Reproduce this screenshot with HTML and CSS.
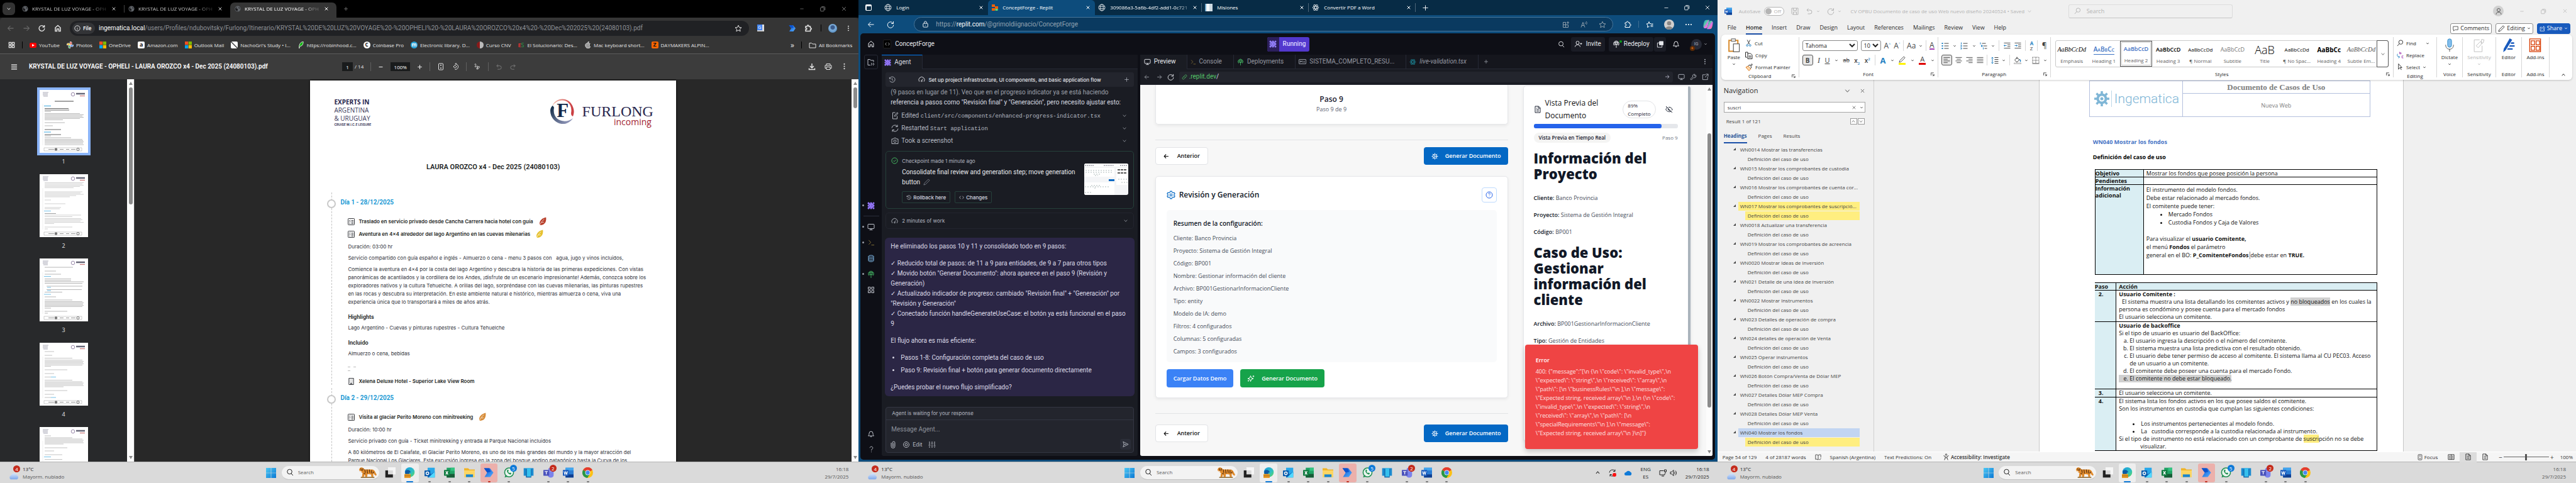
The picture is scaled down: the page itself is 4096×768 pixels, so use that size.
FILE: index.html
```html
<!DOCTYPE html>
<html lang="es">
<head>
<meta charset="utf-8">
<title>Escritorio</title>
<link rel="stylesheet" href="styles.css">
</head>
<body>
<svg class="defs" aria-hidden="true">
<defs>
<linearGradient id="g-win" x1="0" y1="0" x2="1" y2="1"><stop offset="0" stop-color="#4cc8f4"/><stop offset="1" stop-color="#0a78d4"/></linearGradient>
<linearGradient id="g-edge" x1="0" y1="0" x2="1" y2="1"><stop offset="0" stop-color="#1a9be0"/><stop offset=".6" stop-color="#30c1c0"/><stop offset="1" stop-color="#63d84f"/></linearGradient>
<linearGradient id="g-pa" x1="0" y1="0" x2="1" y2="1"><stop offset="0" stop-color="#0b53ce"/><stop offset="1" stop-color="#56b0ff"/></linearGradient>
<linearGradient id="g-cop" x1="0" y1="0" x2="1" y2="1"><stop offset="0" stop-color="#2a7de1"/><stop offset=".35" stop-color="#4fd0a0"/><stop offset=".6" stop-color="#e66cf0"/><stop offset="1" stop-color="#ff8a3c"/></linearGradient>
<linearGradient id="g-ring" x1="0" y1="0" x2="1" y2="0"><stop offset="0" stop-color="#f4c0b0"/><stop offset="1" stop-color="#c8363b"/></linearGradient>
<linearGradient id="g-ring2" x1="0" y1="0" x2="1" y2="1"><stop offset="0" stop-color="#0a2540"/><stop offset="1" stop-color="#a5a8cc"/></linearGradient>
<linearGradient id="g-cloud" x1="0" y1="0" x2="0" y2="1"><stop offset="0" stop-color="#d5e4fb"/><stop offset="1" stop-color="#7ea8ea"/></linearGradient>
</defs>
<symbol id="globe" viewBox="0 0 24 24"><circle cx="12" cy="12" r="10"/><ellipse cx="12" cy="12" rx="4.5" ry="10"/><path d="M3 8.5h18M3 15.5h18"/></symbol>
<symbol id="earth" viewBox="0 0 24 24"><circle cx="12" cy="12" r="11" fill="#5f6368" stroke="none"/><path d="M11 4c-5 2-6 6-3 7s5 2 4 5-1 4 0 5c-6 0-10-5-9-10 1-4 4-7 8-7zM15 6c3 0 5 2 5 5l-4-1z" fill="#1c1c1e" stroke="none"/></symbol>
<symbol id="x" viewBox="0 0 24 24"><path d="M5 5l14 14M19 5L5 19"/></symbol>
<symbol id="plus" viewBox="0 0 24 24"><path d="M12 3v18M3 12h18"/></symbol>
<symbol id="minus" viewBox="0 0 24 24"><path d="M4 12h16"/></symbol>
<symbol id="restore" viewBox="0 0 24 24"><rect x="4" y="7" width="13" height="14" rx="2"/><path d="M8 4h10a3 3 0 0 1 3 3v10"/></symbol>
<symbol id="down" viewBox="0 0 24 24"><path d="M5 8l7 8 7-8"/></symbol>
<symbol id="up" viewBox="0 0 24 24"><path d="M5 16l7-8 7 8"/></symbol>
<symbol id="left" viewBox="0 0 24 24"><path d="M21 12H4M11 4l-8 8 8 8"/></symbol>
<symbol id="right" viewBox="0 0 24 24"><path d="M3 12h17M13 4l8 8-8 8"/></symbol>
<symbol id="reload" viewBox="0 0 24 24"><path d="M20 8a9.5 9.5 0 1 0 1.500 5M21 2v7h-7"/></symbol>
<symbol id="home" viewBox="0 0 24 24"><path d="M4 10l8-7 8 7v11h-5v-7H9v7H4z"/></symbol>
<symbol id="info" viewBox="0 0 24 24"><circle cx="12" cy="12" r="10"/><path d="M12 11v6M12 7v1"/></symbol>
<symbol id="star" viewBox="0 0 24 24"><path d="M12 2.500l3 6.500 7 .8-5.200 4.700 1.500 7-6.300-3.600-6.300 3.600 1.500-7L2 9.800 9 9z"/></symbol>
<symbol id="puzzle" viewBox="0 0 24 24"><path d="M4 6h5V4.500a2.500 2.500 0 0 1 5 0V6h5v5h1a2.500 2.500 0 0 1 0 5h-1v5H4v-5h1.500a2.500 2.500 0 0 0 0-5H4z"/></symbol>
<symbol id="dots" viewBox="0 0 24 24"><g fill="currentColor" stroke="none"><circle cx="12" cy="4" r="2.300"/><circle cx="12" cy="12" r="2.300"/><circle cx="12" cy="20" r="2.300"/></g></symbol>
<symbol id="hdots" viewBox="0 0 24 24"><g fill="currentColor" stroke="none"><circle cx="4" cy="12" r="2.200"/><circle cx="12" cy="12" r="2.200"/><circle cx="20" cy="12" r="2.200"/></g></symbol>
<symbol id="grid" viewBox="0 0 24 24"><path d="M3 3h7v7H3zM14 3h7v7h-7zM3 14h7v7H3zM14 14h7v7h-7z"/></symbol>
<symbol id="menu" viewBox="0 0 24 24"><path d="M2 5h20M2 12h20M2 19h20"/></symbol>
<symbol id="folder" viewBox="0 0 24 24"><path d="M2 5h7l3 3h10v12H2z"/></symbol>
<symbol id="fit" viewBox="0 0 24 24"><rect x="5" y="2" width="14" height="20" rx="2"/><path d="M12 6v4M10 8l2-2 2 2M12 18v-4M10 16l2 2 2-2"/></symbol>
<symbol id="rotate" viewBox="0 0 24 24"><path d="M11 7l5 5-5 5-5-5zM13 3a9 9 0 1 1-2 18M15 0l-3 3 3 3"/></symbol>
<symbol id="draw" viewBox="0 0 24 24"><path d="M3 5c4-4 6 0 3 4s-1 5 3 2 5 0 2 4-1 6 3 4 6-8 3-8-6 6-3 9"/></symbol>
<symbol id="undo" viewBox="0 0 24 24"><path d="M9 3L4 8l5 5M4 8h10a6 6 0 0 1 0 12H7"/></symbol>
<symbol id="redo" viewBox="0 0 24 24"><path d="M15 3l5 5-5 5M20 8H10a6 6 0 0 0 0 12h7"/></symbol>
<symbol id="download" viewBox="0 0 24 24"><path d="M12 2v13M6 10l6 6 6-6M3 17v4h18v-4"/></symbol>
<symbol id="print" viewBox="0 0 24 24"><path d="M6 8V3h12v5M6 17H2V8h20v9h-4M6 13h12v8H6z"/></symbol>
<symbol id="search" viewBox="0 0 24 24"><circle cx="11" cy="10" r="7.500"/><path d="M16 16l6 6"/></symbol>
<symbol id="searchl" viewBox="0 0 24 24"><circle cx="14" cy="9" r="7"/><path d="M9 14l-7 8"/></symbol>
<symbol id="lock" viewBox="0 0 24 24"><rect x="4" y="9" width="16" height="13" rx="2"/><path d="M8 9V6a4 4 0 0 1 8 0v3M12 14.500v2"/></symbol>
<symbol id="checklist" viewBox="0 0 24 24"><rect x="1" y="1" width="22" height="22" rx="2"/><path d="M5 7l1.500 1.500L9 6M12 8h8M5 12l1.500 1.500L9 11M12 13h8M5 18h3M12 18h8"/></symbol>
<symbol id="building" viewBox="0 0 24 24"><path d="M4 1h16v22H4zM8 5v1M12 5v1M16 5v1M8 9v1M12 9v1M16 9v1M8 13v1M12 13v1M16 13v1M10 23v-5h4v5"/></symbol>
<symbol id="leaf" viewBox="0 0 24 24"><path d="M21 1C9 4 1 12 4 22c9 1 19-4 17-21z" fill="currentColor" stroke="none"/><path d="M4 22c3-7 7-12 12-16M9 15l6-1" stroke="#fff" stroke-width="1.200"/></symbol>
<symbol id="agent" viewBox="0 0 24 24"><g fill="currentColor" stroke="none"><circle cx="4" cy="4" r="3"/><circle cx="12" cy="4" r="3"/><circle cx="20" cy="4" r="3"/><circle cx="4" cy="12" r="3"/><circle cx="12" cy="12" r="3"/><circle cx="20" cy="12" r="3"/><circle cx="4" cy="20" r="3"/><circle cx="12" cy="20" r="3"/><circle cx="20" cy="20" r="3"/><path d="M4 1l10 9-4 4L1 5zM12 1l10 9-4 4-9-9zM10 10l4 4-10 9-3-4zM18 10l4 4-10 9-3-4z"/></g></symbol>
<symbol id="history" viewBox="0 0 24 24"><path d="M3 4v5h5M3.500 9A9.500 9.500 0 1 1 4 16M12 7v6l4 2"/></symbol>
<symbol id="gauge" viewBox="0 0 24 24"><path d="M4 19a10 10 0 1 1 16 0M12 15l4-5M10 17a2 2 0 1 0 4 0 2 2 0 0 0-4 0"/></symbol>
<symbol id="editfile" viewBox="0 0 24 24"><path d="M13 2H5v20h14v-9M19 2l3 2-8 9-3 1 0-3z"/></symbol>
<symbol id="sync" viewBox="0 0 24 24"><path d="M2 11a10 10 0 0 1 18-5M20 1v6h-6M22 13a10 10 0 0 1-18 5M4 23v-6h6"/></symbol>
<symbol id="camera" viewBox="0 0 24 24"><path d="M2 6h5l2-3h6l2 3h5v15H2z"/><circle cx="12" cy="13" r="4"/></symbol>
<symbol id="check" viewBox="0 0 24 24"><circle cx="12" cy="12" r="10"/><path d="M7.500 12l3 3 6-6"/></symbol>
<symbol id="pencil" viewBox="0 0 24 24"><path d="M18 2l4 4L8 20l-6 2 2-6z"/></symbol>
<symbol id="code" viewBox="0 0 24 24"><path d="M8 5l-6 7 6 7M16 5l6 7-6 7"/></symbol>
<symbol id="screen" viewBox="0 0 24 24"><rect x="2" y="3" width="20" height="14" rx="2"/><path d="M12 17v4M7 21h10"/></symbol>
<symbol id="prompt" viewBox="0 0 24 24"><path d="M3 4l7 8-7 7M12 21h10"/></symbol>
<symbol id="db" viewBox="0 0 24 24"><ellipse cx="12" cy="5" rx="8" ry="3"/><path d="M4 5v14c0 4 16 4 16 0V5M4 10c0 4 16 4 16 0M4 15c0 4 16 4 16 0"/></symbol>
<symbol id="deploy" viewBox="0 0 24 24"><path d="M6 17a8.500 8.500 0 1 1 12 0M12 24V12M9 15l3-3 3 3M4 7h16M4 12h16M12 2c-4 3-4 9-2 12M12 2c4 3 4 9 2 12"/></symbol>
<symbol id="bell" viewBox="0 0 24 24"><path d="M3 18c2-2 3-4 3-8a6 6 0 0 1 12 0c0 4 1 6 3 8zM10 21h4"/></symbol>
<symbol id="help" viewBox="0 0 24 24"><path d="M7 7c0-6 10-6 10 0 0 4-5 4-5 9M12 20v2"/></symbol>
<symbol id="helpc" viewBox="0 0 24 24"><circle cx="12" cy="12" r="10"/><path d="M9 9c0-4 6-4 6 0 0 2-3 2-3 4M12 16.500v1"/></symbol>
<symbol id="clip" viewBox="0 0 24 24"><path d="M6 6v11a6 6 0 0 0 12 0V6a4 4 0 0 0-8 0v11a2 2 0 0 0 4 0V7"/></symbol>
<symbol id="target" viewBox="0 0 24 24"><circle cx="12" cy="12" r="9"/><circle cx="12" cy="12" r="4"/></symbol>
<symbol id="sliders" viewBox="0 0 24 24"><path d="M4 2v10M4 17v5M1 14h6M12 2v4M12 11v11M9 8h6M20 2v12M20 19v3M17 16h6"/></symbol>
<symbol id="send" viewBox="0 0 24 24"><path d="M4 3l18 9-18 9 3-9zM7 12h8"/></symbol>
<symbol id="link" viewBox="0 0 24 24"><path d="M10 14a4 4 0 0 1 0-6l4-4a4 4 0 0 1 6 6l-3 3M14 10a4 4 0 0 1 0 6l-4 4a4 4 0 0 1-6-6l3-3"/></symbol>
<symbol id="wrench" viewBox="0 0 24 24"><path d="M21 6l-4 3-2-2 3-4a6 6 0 0 0-8 8l-8 8 3 3 8-8a6 6 0 0 0 8-8z"/></symbol>
<symbol id="external" viewBox="0 0 24 24"><path d="M13 4H3v17h17V11M14 2h8v8M22 2L11 13"/></symbol>
<symbol id="adduser" viewBox="0 0 24 24"><circle cx="9" cy="8" r="5"/><path d="M1 21c0-9 16-9 16 0M20 8v6M17 11h6"/></symbol>
<symbol id="user" viewBox="0 0 24 24"><circle cx="12" cy="8" r="5"/><path d="M4 22c0-10 16-10 16 0"/></symbol>
<symbol id="react" viewBox="0 0 24 24"><ellipse cx="12" cy="12" rx="10" ry="4"/><ellipse cx="12" cy="12" rx="10" ry="4" transform="rotate(60 12 12)"/><ellipse cx="12" cy="12" rx="10" ry="4" transform="rotate(120 12 12)"/></symbol>
<symbol id="md" viewBox="0 0 24 24"><rect x="1" y="5" width="22" height="14" rx="1"/><path d="M5 15V9l3 3 3-3v6M17 9v6M15 13l2 2 2-2"/></symbol>
<symbol id="gear" viewBox="0 0 24 24"><circle cx="12" cy="12" r="3"/><path d="M10 2h4l1 3 2.500 1.300L20.500 5.500l2 3.500L20 11.500v1.500l2.500 2-2 3.500-3-.8L15 19l-1 3h-4l-1-3-2.500-1.300-3 .8-2-3.500L4 13v-1.500L1.500 9l2-3.500 3 .8L9 5z"/></symbol>
<symbol id="cog" viewBox="0 0 24 24"><circle cx="12" cy="12" r="7"/><circle cx="12" cy="12" r="2"/><path d="M12 1v4M12 19v4M1 12h4M14 12h9M4 4l3 3M17 17l3 3M20 4l-3 3M4 20l3-3M11 10L8 5M11 14l-3 5"/></symbol>
<symbol id="doc" viewBox="0 0 24 24"><path d="M4 2h11l5 5v15H4zM14 2v6h6M8 12h8M8 17h8M8 8h2"/></symbol>
<symbol id="eyeoff" viewBox="0 0 24 24"><path d="M2 2l20 20M6 6C3 8 2 11 1.500 12c3 7 12 9 16.500 6M10 5c6-1 10 3 12.500 7l-2 3M9 10a4 4 0 0 0 5 5"/></symbol>
<symbol id="spark" viewBox="0 0 24 24"><path d="M11 3l2.500 6.500L20 12l-6.500 2.500L11 21l-2.500-6.500L2 12l6.500-2.500zM20 2v5M17.500 4.500h5M4 17v4M2 19h4"/></symbol>
<symbol id="save" viewBox="0 0 24 24"><path d="M2 2h20v20H5l-3-3zM7 2v7h10V2M7 22v-8h10v8"/></symbol>
<symbol id="bullets" viewBox="0 0 24 24"><path d="M9 4h14M9 12h14M9 20h14" /><path d="M1 4h4M1 12h4M1 20h4" stroke="#1e7fc2" stroke-width="4"/></symbol>
<symbol id="numbers" viewBox="0 0 24 24"><path d="M9 4h14M9 12h14M9 20h14"/><path d="M3 1v6M1 10h3v4H1M1 18h3v4H1" stroke="#1e7fc2"/></symbol>
<symbol id="multi" viewBox="0 0 24 24"><path d="M7 4h12M11 12h12M15 20h8"/><path d="M2 1v6M5 10h3v4H5zM11 17v6" stroke="#1e7fc2"/></symbol>
<symbol id="al" viewBox="0 0 24 24"><path d="M1 3h22M1 9h14M1 15h22M1 21h14"/></symbol>
<symbol id="ac" viewBox="0 0 24 24"><path d="M1 3h22M5 9h14M1 15h22M5 21h14"/></symbol>
<symbol id="ar" viewBox="0 0 24 24"><path d="M1 3h22M9 9h14M1 15h22M9 21h14"/></symbol>
<symbol id="aj" viewBox="0 0 24 24"><path d="M1 3h22M1 9h22M1 15h22M1 21h22"/></symbol>
<symbol id="outdent" viewBox="0 0 24 24"><path d="M1 3h22M13 9h10M13 15h10M1 21h22"/><path d="M10 12H1M4 9l-3 3 3 3" stroke="#1e7fc2"/></symbol>
<symbol id="indent" viewBox="0 0 24 24"><path d="M1 3h22M13 9h10M13 15h10M1 21h22"/><path d="M1 12h9M7 9l3 3-3 3" stroke="#1e7fc2"/></symbol>
<symbol id="spacing" viewBox="0 0 24 24"><path d="M11 3h12M11 9h12M11 15h12M11 21h12"/><path d="M4 2v20M1 5l3-3 3 3M1 19l3 3 3-3" stroke="#1e7fc2"/></symbol>
<symbol id="bucket" viewBox="0 0 24 24"><path d="M10 3l8 7-8 8-7-7zM10 1v7"/><path d="M19 9c3 3 3 6 1 7" stroke="#1e7fc2" stroke-width="3"/><path d="M1 20h22v3H1z" stroke="#777" stroke-width="1"/></symbol>
<symbol id="borders" viewBox="0 0 24 24"><path d="M2 2h20v20M2 2v20M12 2v20M2 12h20" stroke-dasharray="2 2"/><path d="M1 22h22"/></symbol>
<symbol id="launch" viewBox="0 0 24 24"><path d="M2 20V3h17M9 9l12 12M21 11v10H11"/></symbol>
<symbol id="paste" viewBox="0 0 24 28"><path d="M2 4h18v22H2z" fill="#fff" stroke="#d98b2b" stroke-width="2.500"/><path d="M7 1h8v5H7z" fill="#eee" stroke="#666" stroke-width="1.300"/><path d="M11 11h12v16H11z" fill="#fff" stroke="#444" stroke-width="1.300"/></symbol>
<symbol id="cut" viewBox="0 0 24 24"><path d="M7 1l8 15M17 1L9 16"/><g stroke="#1e7fc2"><circle cx="7" cy="20" r="3"/><circle cx="17" cy="20" r="3"/></g></symbol>
<symbol id="copy" viewBox="0 0 24 24"><path d="M8 6V2H1v16h5M8 6h9l5 5v12H8zM11 14h8M11 18h8"/></symbol>
<symbol id="brush" viewBox="0 0 24 24"><path d="M2 12l10 11 6-6-9-9z" fill="#fbd9b0" stroke="#e07b1a"/><path d="M9 8l5-4 2 3 5-6 2 2-5 6 2 3-4 4"/></symbol>
<symbol id="mic" viewBox="0 0 24 28"><rect x="8" y="1" width="8" height="17" rx="4" fill="#83bdeb" stroke="#1e7fc2"/><path d="M4 13c0 12 16 12 16 0M12 22v5"/></symbol>
<symbol id="sens" viewBox="0 0 24 28"><path d="M2 3h11M2 3v24h16V15" fill="none"/><path d="M6 15l9-9 3 4-8 9zM17 2l5 1-2 6-4 1z"/></symbol>
<symbol id="editor" viewBox="0 0 24 28"><g fill="#185abd" stroke="none"><path d="M14 0l5 3L6 24l-5 4 1-7z"/><path d="M17 8h6v3h-7zM14 14h10v3H13zM10 20h10v3H9z"/></g></symbol>
<symbol id="addins" viewBox="0 0 24 28"><g stroke="#d83b01" stroke-width="1.600"><path d="M1 1h22v26H1z"/><path d="M4 5h7v8H4zM14 5h7v8h-7zM4 16h7v8H4zM14 16h7v8h-7z"/></g></symbol>
<symbol id="replace" viewBox="0 0 24 24"><path d="M10 1v7h5V4h-5M23 15h-5v7h5" stroke="#a33fb0"/><path d="M3 8c-3 6 0 11 6 11M6 15l4 4-4 4" stroke="#1e7fc2"/></symbol>
<symbol id="cursor" viewBox="0 0 24 24"><path d="M6 1l12 13h-7l-5 6zM12 14l4 8"/></symbol>
<symbol id="comment" viewBox="0 0 24 24"><path d="M2 3h20v14H9l-5 5v-5H2z"/></symbol>
<symbol id="share" viewBox="0 0 24 24"><path d="M10 6H3v16h17v-8M9 15c0-7 5-8 8-8V2l6 7-6 6v-4"/></symbol>
<symbol id="book" viewBox="0 0 24 24"><path d="M12 5C9 2 5 2 2 3v17c3-1 7-1 10 2V5c3-3 7-3 10-2v10M15 19l3 3 5-6"/></symbol>
<symbol id="access" viewBox="0 0 24 24"><circle cx="12" cy="4" r="2.500"/><path d="M3 8l6 2v5l-3 8M21 8l-6 2v5l3 8M9 15h6"/></symbol>
<symbol id="read" viewBox="0 0 24 24"><path d="M12 4H2v17h10zM12 4h10v17H12zM5 9h4M5 13h4M5 17h4M15 9h4M15 13h4M15 17h4"/></symbol>
<symbol id="win" viewBox="0 0 24 24"><path d="M0 0h11.500v11.500H0zM12.500 0H24v11.500H12.500zM0 12.500h11.500V24H0zM12.500 12.500H24V24H12.500z" fill="url(#g-win)" stroke="none"/></symbol>
<symbol id="mswin" viewBox="0 0 24 24"><g stroke="none"><path fill="#f25022" d="M0 0h11.500v11.500H0z"/><path fill="#7fba00" d="M12.500 0H24v11.500H12.500z"/><path fill="#00a4ef" d="M0 12.500h11.500V24H0z"/><path fill="#ffb900" d="M12.500 12.500H24V24H12.500z"/></g></symbol>
<symbol id="tview" viewBox="0 0 24 24"><g stroke="none"><path d="M1 7h17v16H1z" fill="#222"/><path d="M7 0h17v16H7z" fill="#fafafa" opacity=".85"/></g></symbol>
<symbol id="edge" viewBox="0 0 24 24"><g stroke="none"><circle cx="12" cy="11" r="11" fill="url(#g-edge)"/><path d="M2 8c5-4 12-1 12 4-4-2-5 4 1 8-8 4-15-4-13-12z" fill="#0c59a4"/><path d="M0 15h14v9H0z" fill="#e79b26"/><path d="M0 19h14v1H0z" fill="#8a4f10"/></g></symbol>
<symbol id="outlook" viewBox="0 0 24 24"><g stroke="none"><path d="M7 1h16v14H7z" fill="#28a8ea"/><path d="M7 10l8 5 8-5v13H7z" fill="#1066b8"/><path d="M23 10v13H9z" fill="#50d9ff"/><rect y="7" width="13" height="13" rx="1" fill="#0a5cad"/><circle cx="6.500" cy="13.500" r="3" fill="none" stroke="#fff" stroke-width="2"/></g></symbol>
<symbol id="excel" viewBox="0 0 24 24"><g stroke="none"><path d="M6 1h18v22H6z" fill="#21a366"/><path d="M15 1h9v7h-9z" fill="#33c481"/><path d="M6 15h18v8H6z" fill="#185c37"/><rect y="6" width="13" height="13" rx="1" fill="#107c41"/></g><path d="M4 9l5 7M9 9l-5 7" stroke="#fff" stroke-width="2"/></symbol>
<symbol id="word" viewBox="0 0 24 24"><g stroke="none"><path d="M6 1h18v22H6z" fill="#2b7cd3"/><path d="M6 1h18v6H6z" fill="#41a5ee"/><path d="M6 16h18v7H6z" fill="#103f91"/><rect y="6" width="13" height="13" rx="1" fill="#185abd"/></g><path d="M2.500 9l2 7 2-6 2 6 2-7" stroke="#fff" stroke-width="1.600" fill="none"/></symbol>
<symbol id="explorer" viewBox="0 0 24 24"><g stroke="none"><path d="M0 2h9l3 3h12v17H0z" fill="#f0b429"/><path d="M0 7h24v15H0z" fill="#fdd663"/><path d="M4 22v-6h16v6z" fill="#1a86d0"/></g></symbol>
<symbol id="pa" viewBox="0 0 24 24"><g stroke="none"><path d="M1 2h13l8 10-7 10H2l6-10z" fill="url(#g-pa)"/><path d="M1 2h11l4 8-8 2z" fill="#0b53ce"/></g></symbol>
<symbol id="wa" viewBox="0 0 24 24"><circle cx="12" cy="11.500" r="10" fill="#e9f5ee" stroke="#1f8f52" stroke-width="2.200"/><path d="M2 23l2-6 4 4z" fill="#1f8f52" stroke="none"/><path d="M8 6c-3 3 3 11 8 10l1-3-3-1-1 1c-2-1-3-2-3-4l1-1-1-3z" fill="#1f8f52" stroke="none"/></symbol>
<symbol id="phone" viewBox="0 0 24 24"><g stroke="none"><path d="M1 2h22v17H1z" fill="#1b8bd0"/><path d="M6 4h12v19H6z" fill="#1266a8"/><path d="M8 2h9v19H8z" fill="#36c0ee"/></g></symbol>
<symbol id="teams" viewBox="0 0 24 24"><g stroke="none"><circle cx="15" cy="5" r="4" fill="#7b83eb"/><path d="M8 9h15v9c0 7-13 7-13 0z" fill="#7b83eb"/><rect y="6" width="13" height="13" rx="1" fill="#4b53bc"/></g><path d="M3 9.500h7M6.500 10v6" stroke="#fff" stroke-width="1.700"/></symbol>
<symbol id="chrome" viewBox="0 0 24 24"><g stroke="none"><circle cx="12" cy="12" r="12" fill="#fbc116"/><path d="M12 12L1.600 6A12 12 0 0 1 22.400 6z" fill="#e33b2e"/><path d="M12 12L1.600 6A12 12 0 0 0 11 24l6-9z" fill="#279847"/><circle cx="12" cy="12" r="5.500" fill="#fff"/><circle cx="12" cy="12" r="4.500" fill="#4688f1"/></g></symbol>
<symbol id="cloud" viewBox="0 0 24 18"><path d="M5 17a5 5 0 0 1 1-9 7 7 0 0 1 13 0 5 5 0 0 1 0 9z" fill="url(#g-cloud)" stroke="none"/></symbol>
<symbol id="tiger" viewBox="0 0 34 20"><path d="M2 5c1-4 5-5 8-2l2 2h13c4 0 5 4 8 9l-1 2c-3-1-4-4-5-5v8h-3l-1-5-6-1-1 6h-3l-1-6-2 6H7l1-8c-3-1-6-3-6-6z" fill="#e08a2b" stroke="none"/><path d="M12 5l1 6M16 5l1 7M20 5l1 6M24 6v6M5 3l1 4M9 3L8 7M28 9l-2 3M10 12l3 1" stroke="#4a2a10" stroke-width="1.200"/><path d="M3 7l4 2-2 1z" fill="#fff" stroke="none"/><path d="M5 19h24" stroke="#9c7a48" stroke-width="2"/></symbol>
<symbol id="flogo" viewBox="0 0 40 41"><path d="M3 13C8-2 30-3 36 14c2 6 2 9 0 15-2-1-3-2-3-5C37 3 14-4 3 13z" fill="url(#g-ring)" stroke="none"/><path d="M4 12c-2 1-4 4-4 8 0 19 24 30 36 12C24 42 2 36 6 15z" fill="url(#g-ring2)" stroke="none"/></symbol>
<symbol id="fmini" viewBox="0 0 24 8"><circle cx="4" cy="4" r="2.800" fill="none" stroke="#98a" stroke-width="1"/><path d="M9 3h14" stroke="#667" stroke-width="2.500"/><path d="M15 6.500h8" stroke="#c77" stroke-width="1.200"/></symbol>
<symbol id="pg" viewBox="0 0 77 100"><path d="M0 0h77v100H0z" fill="#fff" stroke="none"/><path d="M5 4h9M5 6h8M5 8h8M6 10h7" stroke="#99a" stroke-width=".8"/><use href="#fmini" x="49" y="3" width="24" height="8"/><path d="M7 92h60v5H7z" stroke="#999" stroke-width=".5"/><path d="M14 94.500h9M32 94.500h6M42 94.500h5M50 94.500h7" stroke="#999" stroke-width="1.200"/><circle cx="26" cy="94.500" r="2.200" fill="#777" stroke="none"/><circle cx="61" cy="94.500" r="2" stroke="#666" stroke-width="1"/><path d="M5 22v66" stroke="#ddd" stroke-width=".5"/></symbol>
</svg>

<main class="desk">

<!-- Chrome: PDF viewer -->
<section class="screen">
<div class="app chrome">
  <div class="c-tabs">
    <button class="c-drop" aria-label="Buscar pestañas"><svg class="i s8 b3"><use href="#down"/></svg></button>
    <div class="c-tab"><svg class="i s10"><use href="#earth"/></svg><span>KRYSTAL DE LUZ VOYAGE - OPH</span><svg class="i s8 b3"><use href="#x"/></svg></div>
    <div class="c-tab c-sep"><svg class="i s10"><use href="#earth"/></svg><span>KRYSTAL DE LUZ VOYAGE - OPH</span><svg class="i s8 b3"><use href="#x"/></svg></div>
    <div class="c-tab c-on"><svg class="i s10"><use href="#earth"/></svg><span>KRYSTAL DE LUZ VOYAGE - OPH</span><svg class="i s8 b3"><use href="#x"/></svg></div>
    <button class="c-new" aria-label="Nueva pestaña"><svg class="i s8"><use href="#plus"/></svg></button>
    <div class="c-win"><svg class="i s8"><use href="#minus"/></svg><svg class="i s10"><use href="#restore"/></svg><svg class="i s10"><use href="#x"/></svg></div>
  </div>
  <div class="c-bar">
    <button class="cell dim" aria-label="Atrás"><svg class="i s12"><use href="#left"/></svg></button>
    <button class="cell dim" aria-label="Adelante"><svg class="i s12"><use href="#right"/></svg></button>
    <button class="cell" aria-label="Recargar"><svg class="i s11 b3"><use href="#reload"/></svg></button>
    <button class="cell" aria-label="Inicio"><svg class="i s12 b3"><use href="#home"/></svg></button>
    <div class="c-omni"><span class="c-chip"><svg class="i s10"><use href="#info"/></svg>File</span><span class="c-url" role="textbox"><b>ingematica.local</b>/users/Profiles/ndubovitsky/Furlong/Itinerario/KRYSTAL%20DE%20LUZ%20VOYAGE%20-%20OPHELI%20-%20LAURA%20OROZCO%20x4%20-%20Dec%202025%20(24080103).pdf</span><svg class="i s12"><use href="#star"/></svg></div>
    <span class="cell c-trans"><i class="trans">G</i></span><span class="cell"></span>
    <span class="cell"><svg class="i s12"><use href="#pa"/></svg></span>
    <span class="cell"><svg class="i s12 b3"><use href="#puzzle"/></svg></span>
    <span class="c-vsep"></span>
    <span class="cell"><i class="face"></i></span>
    <button class="cell" aria-label="Menú"><svg class="i s10"><use href="#dots"/></svg></button>
  </div>
  <nav class="c-marks">
    <svg class="i s11 b3"><use href="#grid"/></svg><span class="c-msep"></span>
    <a href="#"><i class="yt"></i>YouTube</a>
    <a href="#"><svg class="i s11" viewBox="0 0 24 24" stroke="none"><path d="M12 0a6 6 0 0 1 0 12z" fill="#ea4335"/><path d="M24 12a6 6 0 0 1-12 0z" fill="#4285f4"/><path d="M12 24a6 6 0 0 1 0-12z" fill="#34a853"/><path d="M0 12a6 6 0 0 1 12 0z" fill="#fbbc04"/></svg>Photos</a>
    <a href="#"><svg class="i s11"><use href="#mswin"/></svg>OneDrive</a>
    <a href="#"><i class="sq amz">a</i>Amazon.com</a>
    <a href="#"><svg class="i s11"><use href="#mswin"/></svg>Outlook Mail</a>
    <a href="#"><i class="sq nac"></i>NachoGri's Study • I...</a>
    <a href="#"><svg class="i s11" viewBox="0 0 24 24" stroke="none"><path d="M20 0C8 3 5 12 6 24c2-6 2-7 5-8 7-1 9-8 9-16z" fill="#12b812"/></svg>https://robinhood.c...</a>
    <a href="#"><i class="sq coin">C</i>Coinbase Pro</a>
    <a href="#"><i class="sq lib">m</i>Electronic library. D...</a>
    <a href="#"><i class="sq cnv"></i>Curso CNV</a>
    <a href="#"><i class="es"><b>E</b>S</i>El Solucionario: Des...</a>
    <a href="#"><svg class="i s11" viewBox="0 0 24 24" stroke="none"><path d="M12 7c3-2 7-1 8 1-4 3-3 8 1 10-2 5-5 6-8 4-3 2-5 1-8-4C2 11 6 4 12 7zm0-2c0-3 2-5 4-5 0 3-2 5-4 5z" fill="#999"/></svg>Mac keyboard short...</a>
    <a href="#"><i class="sq day">Z</i>DAYMAKERS ALPIN...</a>
    <span class="c-more">»</span><span class="c-msep"></span>
    <a class="c-all" href="#"><svg class="i s12"><use href="#folder"/></svg>All Bookmarks</a>
  </nav>
  <div class="p-bar">
    <div class="p-left"><svg class="i s11 b3"><use href="#menu"/></svg><h1>KRYSTAL DE LUZ VOYAGE - OPHELI - LAURA OROZCO x4 - Dec 2025 (24080103).pdf</h1></div>
    <div class="p-mid"><input class="p-num" value="1" aria-label="Página"><span>/ 14</span><i class="p-sep"></i><svg class="i s9 b3"><use href="#minus"/></svg><input class="p-zoom" value="100%" aria-label="Zoom"><svg class="i s9 b3"><use href="#plus"/></svg><i class="p-sep"></i><svg class="i s12"><use href="#fit"/></svg><svg class="i s12"><use href="#rotate"/></svg><i class="p-sep"></i><svg class="i s12"><use href="#draw"/></svg><i class="p-sep"></i><svg class="i s11 dim"><use href="#undo"/></svg><svg class="i s11 dim"><use href="#redo"/></svg></div>
    <div class="p-right"><svg class="i s12 b3"><use href="#download"/></svg><svg class="i s12"><use href="#print"/></svg><svg class="i s11"><use href="#dots"/></svg></div>
  </div>
  <div class="p-body">
    <aside class="p-thumbs">
      <figure class="on"><svg viewBox="0 0 77 100"><use href="#pg"/><path d="M24 18h30" stroke="#444" stroke-width="1"/><path d="M7 25.500h11M7 67h11" stroke="#3aa6dc" stroke-width="1"/><path d="M8 29.500h38M8 32h39M8 63h26M8 71h26" stroke="#666" stroke-width="1"/><path d="M8 34.500h10M8 37.500h56M8 39.500h62M8 41.500h60M8 43.500h62M8 45.500h56M8 47.500h29M8 52h32M8 57h13M8 73h10M8 76h42M8 78.500h60M8 80.500h61M8 82.500h62M8 84.500h61M8 87h62" stroke="#999" stroke-width=".7"/></svg><figcaption>1</figcaption></figure>
      <figure><svg viewBox="0 0 77 100"><use href="#pg"/><path d="M8 13.500h62M8 15.500h60M8 17.500h62M8 19.500h56M8 21.500h46M8 28h60M8 30h57M8 32h62M8 34h50M8 36h40M8 41h10M8 47h33M8 53h26M8 55h24M8 65h58M8 67.500h44M8 70.500h58M8 72.500h60M8 74.500h57M8 76.500h62M8 78.500h15M8 84h44M8 87h5" stroke="#bbb" stroke-width=".7"/><path d="M7 58.500h11" stroke="#3aa6dc" stroke-width=".7"/><path d="M8 62.500h18" stroke="#888" stroke-width=".8"/></svg><figcaption>2</figcaption></figure>
      <figure><svg viewBox="0 0 77 100"><use href="#pg"/><path d="M8 14h45M8 20h18M8 25h26M8 32.500h42M8 35h42M8 37h62M8 39.500h60M11 44h57M11 49.500h56M8 53.500h28M8 61h18M8 66h44M8 68.500h60M8 70.500h62M8 72.500h61M8 74.500h62M8 76.500h60M8 79h10M8 84h36M8 87h5" stroke="#999" stroke-width=".7"/><path d="M7 28.500h11M7 57h11M12 46h6M12 51h6" stroke="#3aa6dc" stroke-width=".7"/></svg><figcaption>3</figcaption></figure>
      <figure><svg viewBox="0 0 77 100"><use href="#pg"/><path d="M8 14h15M8 20h12M8 24.500h44M8 27.500h60M8 29.500h62M8 31.500h61M8 33.500h62M8 35.500h60M8 37.500h10M8 43h36M8 49h15M8 54.500h10M8 59.500h44M8 62h60M8 64h62M8 66h61M8 68h62M8 70h30M8 76h36M8 82h15M8 87h10" stroke="#aaa" stroke-width=".7"/><path d="M18 54.500h8M18 87h8" stroke="#3aa6dc" stroke-width=".7"/></svg><figcaption>4</figcaption></figure>
      <figure><svg viewBox="0 0 77 100"><use href="#pg"/><path d="M8 14h10M8 17h44M8 19h60M8 21h62M8 23h61M8 25h62M8 27h30M8 33h36M8 38h15M8 44h28M8 51.500h28" stroke="#aaa" stroke-width=".7"/><path d="M7 47.500h11" stroke="#3aa6dc" stroke-width=".7"/></svg></figure>
    </aside>
    <div class="sbar"><i class="tri-u"></i><i class="sb-th th1"></i><i class="tri-d"></i></div>
    <div class="p-view">
      <article class="sheet">
        <header class="sh-head">
          <div class="experts"><b>EXPERTS IN</b><span>ARGENTINA</span><span>&amp; URUGUAY</span><em>CRUISE M.I.C.E LEISURE</em></div>
          <div class="furlong"><span class="f-mark"><svg viewBox="0 0 40 41"><use href="#flogo"/></svg><b>F</b></span><span class="f-name">FURLONG<em>incoming</em></span></div>
        </header>
        <h2>LAURA OROZCO x4 - Dec 2025 (24080103)</h2>
        <section class="day">
          <h3><i></i>Día 1 - 28/12/2025</h3>
          <h4><svg class="i s11"><use href="#checklist"/></svg>Traslado en servicio privado desde Cancha Carrera hacia hotel con guía<svg class="i s14 red"><use href="#leaf"/></svg></h4>
          <h4><svg class="i s11"><use href="#checklist"/></svg>Aventura en 4x4 alrededor del lago Argentino en las cuevas milenarias<svg class="i s14 yel"><use href="#leaf"/></svg></h4>
          <p>Duración: 03:00 hr</p>
          <p>Servicio compartido con guía español e inglés - Almuerzo o cena - menu 3 pasos con &nbsp; agua, jugo y vinos incluidos,</p>
          <p>Comience la aventura en 4x4 por la costa del lago Argentino y descubra la historia de las primeras expediciones. Con vistas<br>panorámicas de acantilados y la cordillera de los Andes, ¡disfrute de un escenario impresionante! Además, conozca sobre los<br>exploradores nativos y la cultura Tehuelche. A orillas del lago, sorpréndase con las cuevas milenarias, las pinturas rupestres<br>en las rocas y descubra su interpretación. En este ambiente natural e histórico, mientras almuerza o cena, viva una<br>experiencia única que lo transportará a miles de años atrás.</p>
          <h5>Highlights</h5><p class="tight">Lago Argentino - Cuevas y pinturas rupestres - Cultura Tehuelche</p>
          <h5>Incluido</h5><p class="tight">Almuerzo o cena, bebidas</p>
          <div class="dash"><i></i><i></i><i></i></div>
          <h4 class="hotel"><svg class="i s11"><use href="#building"/></svg>Xelena Deluxe Hotel - Superior Lake View Room</h4>
        </section>
        <section class="day">
          <h3><i></i>Día 2 - 29/12/2025</h3>
          <h4><svg class="i s11"><use href="#checklist"/></svg>Visita al glaciar Perito Moreno con minitreeking<svg class="i s14 ora"><use href="#leaf"/></svg></h4>
          <p>Duración: 10:00 hr</p>
          <p>Servicio privado con guía - Ticket minitrekking y entrada al Parque Nacional incluidos</p>
          <p>A 80 kilómetros de El Calafate, el Glaciar Perito Moreno, es uno de los más grandes del mundo y la mayor atracción del<br>Parque Nacional Los Glaciares. Esta excursión ingresa en la zona del bosque andino patagónico hasta la Curva de los</p>
        </section>
      </article>
    </div>
    <div class="sbar"><i class="tri-u"></i><i class="sb-th th2"></i><i class="tri-d"></i></div>
  </div>
</div>
<footer class="task">
  <div class="t-wx"><span class="wx"><svg viewBox="0 0 24 18"><use href="#cloud"/></svg><i class="bdg r">4</i></span><span class="two"><b>13°C</b><span>Mayorm. nublado</span></span></div>
  <div class="t-mid">
    <button class="t-start" aria-label="Inicio"><svg class="s16"><use href="#win"/></svg></button>
    <label class="t-search"><svg class="i s12"><use href="#search"/></svg><input placeholder="Search"><svg class="tiger"><use href="#tiger"/></svg></label>
    <div class="t-apps"><button aria-label="Vista de tareas"><svg><use href="#tview"/></svg></button><button class="cur" aria-label="Edge"><svg><use href="#edge"/></svg></button><button class="run" aria-label="Outlook"><svg><use href="#outlook"/></svg></button><button class="run" aria-label="Excel"><svg><use href="#excel"/></svg></button><button class="run" aria-label="Explorador"><svg><use href="#explorer"/></svg></button><button class="run pink" aria-label="Power Automate"><svg><use href="#pa"/></svg></button><button class="run" aria-label="WhatsApp"><svg><use href="#wa"/></svg><i class="bdg bl">5</i></button><button aria-label="Teléfono"><svg><use href="#phone"/></svg></button><button class="run" aria-label="Teams"><svg><use href="#teams"/></svg><i class="bdg r">2</i></button><button class="run" aria-label="Word"><svg><use href="#word"/></svg></button><button class="run" aria-label="Chrome"><svg><use href="#chrome"/></svg></button></div>
  </div>
  <div class="t-tray"><span class="two end"><span>16:18</span><span>29/7/2025</span></span></div>
</footer>
</section>

<!-- Edge: Replit -->
<section class="screen">
<div class="app edge">
  <div class="e-tabs">
    <span class="e-ws"><i></i></span>
    <div class="e-tab"><svg class="i s12"><use href="#globe"/></svg><span>Login</span><svg class="i s8 b3"><use href="#x"/></svg></div>
    <div class="e-tab on"><i class="replit"></i><span>ConceptForge - Replit</span><svg class="i s8 b3"><use href="#x"/></svg></div>
    <div class="e-tab line"><svg class="i s12"><use href="#globe"/></svg><span class="fade">309086a3-5a6b-4df2-add1-0c721</span><svg class="i s8 b3"><use href="#x"/></svg></div>
    <div class="e-tab line"><i class="mis"></i><span>Misiones</span><svg class="i s8 b3"><use href="#x"/></svg></div>
    <div class="e-tab line"><svg class="i s12 gpt"><use href="#react"/></svg><span>Convertir PDF a Word</span><svg class="i s8 b3"><use href="#x"/></svg></div>
    <button class="e-new" aria-label="Nueva pestaña"><svg class="i s11"><use href="#plus"/></svg></button>
    <div class="e-win"><svg class="i s9"><use href="#minus"/></svg><svg class="i s10"><use href="#restore"/></svg><svg class="i s10"><use href="#x"/></svg></div>
  </div>
  <div class="e-bar">
    <button class="e-ic" aria-label="Atrás"><svg class="i s12"><use href="#left"/></svg></button>
    <button class="e-ic" aria-label="Recargar"><svg class="i s12"><use href="#reload"/></svg></button>
    <div class="e-omni"><svg class="i s11"><use href="#lock"/></svg><span role="textbox">https://<b>replit.com</b>/@grimoldiignacio/ConceptForge</span><div class="e-oi"><svg class="i s12" viewBox="0 0 24 24"><path d="M3 5h8v8H3zM3 13h8v8H3zM11 13h8v8h-8zM18 2v8M14 6h8"/></svg><svg class="i s12" viewBox="0 0 24 24"><path d="M2 21L8 5l6 16M4 15h8M14 5c2 1 2 3 1 5M18 2c3 3 3 6 1 10"/></svg><svg class="i s12"><use href="#star"/></svg></div></div>
    <svg class="i s12"><use href="#puzzle"/></svg><i class="e-sep"></i>
    <svg class="i s12" viewBox="0 0 24 24"><path d="M10 3l2 6h5M10 3L8 9l-6 1 4 4-1 7 6-3M15 14h8M15 18h8M18 10h5"/></svg>
    <span class="e-av"><svg viewBox="0 0 24 24"><circle cx="12" cy="9" r="5" fill="#8a8886"/><path d="M3 24c0-10 18-10 18 0z" fill="#8a8886"/></svg></span>
    <svg class="i s12"><use href="#hdots"/></svg>
    <svg class="s16" viewBox="0 0 24 24"><path d="M8 1h7l-4 15c-1 4-3 5-6 5-4 0-5-4-4-8C2 6 3 1 8 1z" fill="url(#g-cop)"/><path d="M16 23H9l4-15c1-4 3-5 6-5 4 0 5 4 4 8-1 7-2 12-7 12z" fill="url(#g-cop)"/></svg>
  </div>
  <div class="rep">
    <header class="r-head">
      <svg class="i s12 rh"><use href="#home"/></svg><span class="r-logo"><svg class="i s8"><use href="#code"/></svg></span><h1>ConceptForge</h1>
      <button class="r-run"><span><svg class="s12"><use href="#agent"/></svg></span>Running</button>
      <div class="r-acts"><svg class="i s11"><use href="#search"/></svg><button class="r-btn"><svg class="i s12"><use href="#adduser"/></svg>Invite</button><span class="r-pair"><button class="r-btn"><span class="r-dep"><svg class="i s12"><use href="#deploy"/></svg><i></i></span>Redeploy</button><button class="r-btn r-sm" aria-label="Ventanas"><svg class="i s11" viewBox="0 0 24 24"><path d="M12 7H3v15h16v-8"/><path d="M10 2h13v12H10z" fill="currentColor"/></svg></button></span><svg class="i s12"><use href="#bell"/></svg><span class="r-user"><span>IG<i>+</i></span><svg class="i s6"><use href="#down"/></svg></span></div>
    </header>
    <div class="r-body">
      <aside class="r-rail">
        <button class="r-fold" aria-label="Archivos"><svg class="i s12" viewBox="0 0 24 24"><path d="M10 21H2V3h7l2 3h9v5M12 14l4 4-4 4M18 14l4 4-4 4"/></svg></button>
        <div><span class="dot"><svg class="s12 vio"><use href="#agent"/></svg></span><hr><span class="dot"><svg class="i s12"><use href="#screen"/></svg></span><span class="dot"><svg class="i s11 gold"><use href="#prompt"/></svg></span><span><svg class="i s12 sky"><use href="#db"/></svg></span><span class="dot"><svg class="i s12 grn"><use href="#deploy"/></svg></span><span><svg class="i s12"><use href="#grid"/></svg></span></div>
        <div><span><svg class="i s12"><use href="#bell"/></svg></span><span><svg class="i s11"><use href="#help"/></svg></span></div>
      </aside>
      <section class="agent">
        <div class="a-tabs"><button><svg class="s11 vio"><use href="#agent"/></svg>Agent</button></div>
        <div class="a-flow">
          <div class="a-top"><svg class="i s11"><use href="#history"/></svg><b><svg class="i s11"><use href="#gauge"/></svg>Set up project infrastructure, UI components, and basic application flow</b><svg class="i s9"><use href="#plus"/></svg></div>
          <p class="a-txt"><span>(9 pasos en lugar de 11). Veo que en el progreso indicator ya se está haciendo</span><br>referencia a pasos como "Revisión final" y "Generación", pero necesito ajustar esto:</p>
          <div class="a-step"><svg class="i s12"><use href="#editfile"/></svg><span>Edited <code>client/src/components/enhanced-progress-indicator.tsx</code></span><svg class="i s8"><use href="#down"/></svg></div>
          <div class="a-step"><svg class="i s12"><use href="#sync"/></svg><span>Restarted <code>Start application</code></span><svg class="i s8"><use href="#down"/></svg></div>
          <div class="a-step"><svg class="i s12"><use href="#camera"/></svg><span>Took a screenshot</span><svg class="i s8"><use href="#down"/></svg></div>
          <div class="a-check"><svg class="i s11 ok"><use href="#check"/></svg><div><small>Checkpoint made 1 minute ago</small><p>Consolidate final review and generation step; move generation button <svg class="i s11 pen"><use href="#pencil"/></svg></p><span class="a-btns"><button><svg class="i s8"><use href="#history"/></svg>Rollback here</button><button><svg class="i s8"><use href="#code"/></svg>Changes</button></span></div>
            <svg class="shot" viewBox="0 0 70 50"><path d="M0 0h70v50H0z" fill="#f4f5f7"/><path d="M0 0h70v5H0zM0 7h48v14H0zM51 7h19v27H51zM0 30h48v20H0z" fill="#fff"/><path d="M1 3h15M31 3h16M57 3h12" stroke="#667" stroke-width="1" stroke-dasharray="2 1"/><path d="M2 11h44M2 14h44M15 17h12M17 19h5M11 35h16M1 37h39M16 39h4M1 46h11M54 25h14M59 30h10" stroke="#9aa" stroke-width=".8" stroke-dasharray="2 2"/><path d="M53 10h14M53 15h15" stroke="#222" stroke-width="1.500" stroke-dasharray="4 1"/><path d="M39 25h9v3h-9z" fill="#0468c4"/></svg></div>
          <div class="a-work"><svg class="i s11"><use href="#gauge"/></svg><span>2 minutes of work</span><svg class="i s8"><use href="#down"/></svg></div>
          <div class="a-msg">
            <p>He eliminado los pasos 10 y 11 y consolidado todo en 9 pasos:</p>
            <p>✓ Reducido total de pasos: de 11 a 9 para entidades, de 9 a 7 para otros tipos<br>✓ Movido botón "Generar Documento": ahora aparece en el paso 9 (Revisión y<br>Generación)<br>✓ Actualizado indicador de progreso: cambiado "Revisión final" + "Generación" por<br>"Revisión y Generación"<br>✓ Conectado función handleGenerateUseCase: el botón ya está funcional en el paso<br>9</p>
            <p>El flujo ahora es más eficiente:</p>
            <ul><li>Pasos 1-8: Configuración completa del caso de uso</li><li>Paso 9: Revisión final + botón para generar documento directamente</li></ul>
            <p>¿Puedes probar el nuevo flujo simplificado?</p>
          </div>
          <form class="a-in"><small>Agent is waiting for your response</small><textarea rows="1" placeholder="Message Agent..." aria-label="Mensaje"></textarea><div><svg class="i s12"><use href="#clip"/></svg><span><svg class="i s12"><use href="#target"/></svg>Edit</span><svg class="i s12"><use href="#sliders"/></svg><button type="button" aria-label="Enviar"><svg class="i s11"><use href="#send"/></svg></button></div></form>
        </div>
      </section>
      <section class="prev">
        <div class="v-tabs"><button class="on"><svg class="i s11"><use href="#screen"/></svg>Preview</button><button><svg class="i s9 gold"><use href="#prompt"/></svg>Console</button><button><svg class="i s11 grn"><use href="#deploy"/></svg>Deployments</button><button><svg class="i s12"><use href="#md"/></svg>SISTEMA_COMPLETO_RESU...</button><button class="it"><svg class="i s11 teal"><use href="#react"/></svg>live-validation.tsx</button><svg class="i s8"><use href="#plus"/></svg><svg class="i s10 far"><use href="#dots"/></svg></div>
        <div class="v-url"><svg class="i s9"><use href="#left"/></svg><svg class="i s9"><use href="#right"/></svg><svg class="i s11 lit"><use href="#reload"/></svg><div role="textbox"><svg class="i s9 grn2"><use href="#link"/></svg><span><b>.replit.dev</b>/</span><svg class="i s8"><use href="#right"/></svg></div><svg class="i s11"><use href="#screen"/></svg><svg class="i s11"><use href="#wrench"/></svg><svg class="i s11"><use href="#external"/></svg></div>
        <div class="v-page">
          <div class="v-main">
            <div class="card step"><h2>Paso 9</h2><p>Paso 9 de 9</p></div>
            <div class="v-nav"><button class="ant"><svg class="i s9 b3"><use href="#left"/></svg>Anterior</button><button class="gen"><svg class="i s11"><use href="#cog"/></svg>Generar Documento</button></div>
            <div class="card rev">
              <div class="rev-h"><svg class="i s14"><use href="#gear"/></svg><h2>Revisión y Generación</h2><button aria-label="Ayuda"><svg class="i s12"><use href="#helpc"/></svg></button></div>
              <div class="sum"><h3>Resumen de la configuración:</h3><p>Cliente: Banco Provincia</p><p>Proyecto: Sistema de Gestión Integral</p><p>Código: BP001</p><p>Nombre: Gestionar información del cliente</p><p>Archivo: BP001GestionarInformacionCliente</p><p>Tipo: entity</p><p>Modelo de IA: demo</p><p>Filtros: 4 configurados</p><p>Columnas: 5 configuradas</p><p>Campos: 3 configurados</p></div>
              <div class="rev-b"><button class="blue">Cargar Datos Demo</button><button class="green"><svg class="i s12"><use href="#spark"/></svg>Generar Documento</button></div>
            </div>
            <div class="v-nav low"><button class="ant"><svg class="i s9 b3"><use href="#left"/></svg>Anterior</button><button class="gen"><svg class="i s11"><use href="#cog"/></svg>Generar Documento</button></div>
          </div>
          <aside class="card docv">
            <div class="dv-h"><svg class="i s12"><use href="#doc"/></svg><h2>Vista Previa del Documento</h2><span class="pill">89%<br>Completo</span><svg class="i s12"><use href="#eyeoff"/></svg></div>
            <div class="prog"><i></i></div>
            <div class="dv-s"><span>Vista Previa en Tiempo Real</span><em>Paso 9</em></div>
            <h1>Información del Proyecto</h1><p><b>Cliente:</b> Banco Provincia</p><p><b>Proyecto:</b> Sistema de Gestión Integral</p><p><b>Código:</b> BP001</p>
            <h1>Caso de Uso: Gestionar información del cliente</h1><p><b>Archivo:</b> BP001GestionarInformacionCliente</p><p><b>Tipo:</b> Gestión de Entidades</p>
            <i class="dv-sb"></i>
          </aside>
          <div class="sbar v-sb"><i class="tri-u"></i><i class="sb-th th3"></i><i class="tri-d"></i></div>
          <div class="toast" role="alert"><b>Error</b><p>400: {"message":"[\n {\n \"code\": \"invalid_type\",\n<br>\"expected\": \"string\",\n \"received\": \"array\",\n<br>\"path\": [\n \"businessRules\"\n ],\n \"message\":<br>\"Expected string, received array\"\n },\n {\n \"code\":<br>\"invalid_type\",\n \"expected\": \"string\",\n<br>\"received\": \"array\",\n \"path\": [\n<br>\"specialRequirements\"\n ],\n \"message\":<br>\"Expected string, received array\"\n }\n]"}</p></div>
        </div>
      </section>
    </div>
  </div>
</div>
<footer class="task">
  <div class="t-wx"><span class="wx"><svg viewBox="0 0 24 18"><use href="#cloud"/></svg><i class="bdg r">4</i></span><span class="two"><b>13°C</b><span>Mayorm. nublado</span></span></div>
  <div class="t-mid">
    <button class="t-start" aria-label="Inicio"><svg class="s16"><use href="#win"/></svg></button>
    <label class="t-search"><svg class="i s12"><use href="#search"/></svg><input placeholder="Search"><svg class="tiger"><use href="#tiger"/></svg></label>
    <div class="t-apps"><button aria-label="Vista de tareas"><svg><use href="#tview"/></svg></button><button class="cur" aria-label="Edge"><svg><use href="#edge"/></svg></button><button class="run" aria-label="Outlook"><svg><use href="#outlook"/></svg></button><button class="run" aria-label="Excel"><svg><use href="#excel"/></svg></button><button class="run" aria-label="Explorador"><svg><use href="#explorer"/></svg></button><button class="run pink" aria-label="Power Automate"><svg><use href="#pa"/></svg></button><button class="run" aria-label="WhatsApp"><svg><use href="#wa"/></svg><i class="bdg bl">5</i></button><button aria-label="Teléfono"><svg><use href="#phone"/></svg></button><button class="run" aria-label="Teams"><svg><use href="#teams"/></svg><i class="bdg r">2</i></button><button class="run" aria-label="Word"><svg><use href="#word"/></svg></button><button class="run" aria-label="Chrome"><svg><use href="#chrome"/></svg></button></div>
  </div>
  <div class="t-tray main"><svg class="i s9 b3"><use href="#up"/></svg><span class="upd"><svg class="i s12"><use href="#sync"/></svg><i></i></span><svg class="s12" viewBox="0 0 24 24"><path d="M5 20a5 5 0 0 1 0-10 8 8 0 0 1 14-1 6 6 0 0 1 0 11z" fill="#0f7ad8"/></svg><span class="two mid"><span>ENG</span><span>ES</span></span><span class="net"><svg class="i s12" viewBox="0 0 24 24"><path d="M15 5H2v13h16v-4M8 22h8M17 2h6v6h-6zM20 8v6"/></svg><svg class="i s12" viewBox="0 0 24 24"><path d="M2 9h4l6-6v18l-6-6H2zM15 9c2 2 2 4 0 6M18 5c4 4 4 10 0 14"/></svg></span><span class="two end"><span>16:18</span><span>29/7/2025</span></span></div>
</footer>
</section>

<!-- Word -->
<section class="screen">
<div class="app word">
  <div class="w-title">
    <div class="w-quick"><svg class="s12"><use href="#word"/></svg><span>AutoSave</span><button class="w-tog" role="switch" aria-checked="false" aria-label="AutoSave"><i></i>Off</button><svg class="i s12"><use href="#save"/></svg><svg class="i s12"><use href="#undo"/></svg><svg class="i s6 b3"><use href="#down"/></svg><svg class="i s12"><use href="#reload"/></svg><svg class="i s6 b3"><use href="#down"/></svg><span class="w-name">CV OPBU Documento de caso de uso Web nuevo diseño 20240524 • Saved</span><svg class="i s8"><use href="#down"/></svg></div>
    <label class="w-search"><svg class="i s11"><use href="#searchl"/></svg><input placeholder="Search"></label>
    <div class="w-win"><span class="w-av"><svg class="i s12"><use href="#user"/></svg></span><svg class="i s8"><use href="#minus"/></svg><svg class="i s10"><use href="#restore"/></svg><svg class="i s9"><use href="#x"/></svg></div>
  </div>
  <div class="w-menu"><a href="#">File</a><a href="#" class="on">Home</a><a href="#">Insert</a><a href="#">Draw</a><a href="#">Design</a><a href="#">Layout</a><a href="#">References</a><a href="#">Mailings</a><a href="#">Review</a><a href="#">View</a><a href="#">Help</a><div><button><svg class="i s9"><use href="#comment"/></svg>Comments</button><button><svg class="i s11"><use href="#pencil"/></svg>Editing<svg class="i s6 b3"><use href="#down"/></svg></button><button class="sh"><svg class="i s9"><use href="#share"/></svg>Share<svg class="i s6 b3"><use href="#down"/></svg></button></div></div>
  <div class="ribbon">
    <div class="rg g-clip"><div class="tools"><button class="big"><svg class="bi"><use href="#paste"/></svg>Paste<svg class="i s6 b3"><use href="#down"/></svg></button><div class="lst"><button><svg class="i s11"><use href="#cut"/></svg>Cut</button><button><svg class="i s12"><use href="#copy"/></svg>Copy</button><button><svg class="i s12"><use href="#brush"/></svg>Format Painter</button></div></div><h6>Clipboard<svg class="i s6 b3"><use href="#launch"/></svg></h6></div>
    <div class="rg g-font"><div class="tools rows"><div><select class="fam" aria-label="Fuente"><option>Tahoma</option></select><select class="siz" aria-label="Tamaño"><option>10</option></select><span class="gl a1">A<sup>^</sup></span><span class="gl a2">A<sup>ˇ</sup></span><i class="vs"></i><span class="gl">Aa</span><svg class="i s6 b3"><use href="#down"/></svg><i class="vs"></i><span class="gl era">A</span></div><div><button class="on"><b>B</b></button><span class="gl ital">I</span><span class="gl und">U</span><svg class="i s6 b3"><use href="#down"/></svg><span class="gl str">ab</span><span class="gl sx">x<sub>2</sub></span><span class="gl sx">x<sup>2</sup></span><i class="vs"></i><span class="gl glow">A</span><svg class="i s6 b3"><use href="#down"/></svg><span class="ul yel2"><svg class="i s11"><use href="#pencil"/></svg></span><svg class="i s6 b3"><use href="#down"/></svg><span class="ul red2">A</span><svg class="i s6 b3"><use href="#down"/></svg></div></div><h6>Font<svg class="i s6 b3"><use href="#launch"/></svg></h6></div>
    <div class="rg g-par"><div class="tools rows"><div><svg class="i s12"><use href="#bullets"/></svg><svg class="i s6 b3"><use href="#down"/></svg><svg class="i s12"><use href="#numbers"/></svg><svg class="i s6 b3"><use href="#down"/></svg><svg class="i s12"><use href="#multi"/></svg><svg class="i s6 b3"><use href="#down"/></svg><i class="vs"></i><svg class="i s11"><use href="#outdent"/></svg><svg class="i s11"><use href="#indent"/></svg><i class="vs"></i><span class="az"><b>A</b>Z</span><i class="vs"></i><span class="gl">¶</span></div><div><button class="on" aria-label="Izquierda"><svg class="i s11"><use href="#al"/></svg></button><svg class="i s11"><use href="#ac"/></svg><svg class="i s11"><use href="#ar"/></svg><svg class="i s11"><use href="#aj"/></svg><i class="vs"></i><svg class="i s12"><use href="#spacing"/></svg><svg class="i s6 b3"><use href="#down"/></svg><i class="vs"></i><svg class="i s12"><use href="#bucket"/></svg><svg class="i s6 b3"><use href="#down"/></svg><svg class="i s12"><use href="#borders"/></svg><svg class="i s6 b3"><use href="#down"/></svg></div></div><h6>Paragraph<svg class="i s6 b3"><use href="#launch"/></svg></h6></div>
    <div class="rg g-sty"><div class="gal"><button><span class="st s-em">AaBbCcDd</span>Emphasis</button><button><span class="st s-h1">AaBbCc</span>Heading 1</button><button class="sel"><span class="st s-h2">AaBbCcD</span>Heading 2</button><button><span class="st s-h3">AaBbCcD</span>Heading 3</button><button><span class="st">AaBbCcDd</span>¶ Normal</button><button><span class="st s-sub">AaBbCcD</span>Subtitle</button><button><span class="st s-ti">AaB</span>Title</button><button><span class="st">AaBbCcDd</span>¶ No Spac...</button><button><span class="st s-h4">AaBbCc</span>Heading 4</button><button><span class="st s-se">AaBbCcDd</span>Subtle Em...</button><span class="more"><svg class="i s8"><use href="#down"/></svg></span></div><h6>Styles<svg class="i s6 b3"><use href="#launch"/></svg></h6></div>
    <div class="rg g-ed"><div class="tools"><div class="lst"><button><svg class="i s11"><use href="#searchl"/></svg>Find<svg class="i s6 b3 far"><use href="#down"/></svg></button><button><svg class="i s11"><use href="#replace"/></svg>Replace</button><button><svg class="i s11"><use href="#cursor"/></svg>Select<svg class="i s6 b3"><use href="#down"/></svg></button></div></div><h6>Editing</h6></div>
    <div class="rg g1"><div class="tools"><button class="big"><svg class="bi i"><use href="#mic"/></svg>Dictate<svg class="i s6 b3"><use href="#down"/></svg></button></div><h6>Voice</h6></div>
    <div class="rg g2"><div class="tools"><button class="big off"><svg class="bi i"><use href="#sens"/></svg>Sensitivity<svg class="i s6 b3"><use href="#down"/></svg></button></div><h6>Sensitivity</h6></div>
    <div class="rg g1"><div class="tools"><button class="big"><svg class="bi"><use href="#editor"/></svg>Editor</button></div><h6>Editor</h6></div>
    <div class="rg g3"><div class="tools"><button class="big"><svg class="bi i"><use href="#addins"/></svg>Add-ins</button></div><h6>Add-ins</h6></div>
    <div class="rg g4"><svg class="i s8 b3"><use href="#up"/></svg></div>
  </div>
  <div class="w-body">
    <aside class="nav">
      <div class="n-h"><h2>Navigation</h2><svg class="i s11"><use href="#down"/></svg><svg class="i s9"><use href="#x"/></svg></div>
      <label class="n-s"><input value="suscri" aria-label="Buscar"><svg class="i s8"><use href="#x"/></svg><svg class="i s6 b3"><use href="#down"/></svg></label>
      <div class="n-r"><span>Result 1 of 121</span><button aria-label="Anterior"><svg class="i s8"><use href="#up"/></svg></button><button aria-label="Siguiente"><svg class="i s8"><use href="#down"/></svg></button></div>
      <div class="n-t"><a href="#" class="on">Headings</a><a href="#">Pages</a><a href="#">Results</a></div>
      <ul>
        <li>WN0014 Mostrar las transferencias</li><li class="d">Definición del caso de uso</li>
        <li>WN015 Mostrar los comprobantes de custodia</li><li class="d">Definición del caso de uso</li>
        <li>WN016 Mostrar los comprobantes de cuenta cor...</li><li class="d">Definición del caso de uso</li>
        <li class="y">WN017 Mostrar los comprobantes de suscripció...</li><li class="d y">Definición del caso de uso</li>
        <li>WN0018 Actualizar una transferencia</li><li class="d">Definición del caso de uso</li>
        <li>WN019 Mostrar los comprobantes de acreencia</li><li class="d">Definición del caso de uso</li>
        <li>WN0020 Mostrar Ideas de Inversión</li><li class="d">Definición del caso de uso</li>
        <li>WN021 Detalle de una Idea de Inversión</li><li class="d">Definición del caso de uso</li>
        <li>WN0022 Mostrar Instrumentos</li><li class="d">Definición del caso de uso</li>
        <li>WN023 Detalles de operación de compra</li><li class="d">Definición del caso de uso</li>
        <li>WN024 detalles de operación de Venta</li><li class="d">Definición del caso de uso</li>
        <li>WN025 Operar instrumentos</li><li class="d">Definición del caso de uso</li>
        <li>WN026 Botón Compra/Venta de Dólar MEP</li><li class="d">Definición del caso de uso</li>
        <li>WN027 Detalles Dólar MEP Compra</li><li class="d">Definición del caso de uso</li>
        <li>WN028 Detalles Dólar MEP Venta</li><li class="d">Definición del caso de uso</li>
        <li class="b">WN040 Mostrar los fondos</li><li class="d y">Definición del caso de uso</li>
      </ul>
    </aside>
    <div class="w-view">
      <article class="w-page">
        <table class="t-head"><tr><td rowspan="2"><span class="inge"><svg class="s24" viewBox="0 0 24 24"><circle cx="12" cy="12" r="6.500" fill="none" stroke="#7fb6d6" stroke-width="4"/><circle cx="12" cy="12" r="2.500" fill="#7fb6d6"/><path d="M12 0v4M12 20v4M0 12h4M20 12h4M3.500 3.500l3 3M17.500 17.500l3 3M20.500 3.500l-3 3M3.500 20.500l3-3" stroke="#7fb6d6" stroke-width="3.500"/></svg><span>Ingematica</span></span></td><td class="dcu">Documento de Casos de Uso</td></tr><tr><td class="nw">Nueva Web</td></tr></table>
        <h2>WN040 Mostrar los fondos</h2>
        <h3>Definición del caso de uso</h3>
        <table class="t1"><tr><th>Objetivo</th><td>Mostrar los fondos que posee posición la persona</td></tr><tr><th>Pendientes</th><td></td></tr><tr class="tall"><th>Información adicional</th><td>El instrumento del modelo fondos.<br>Debe estar relacionado al mercado fondos.<br>El comitente puede tener:<ul><li>Mercado Fondos</li><li>Custodia Fondos y Caja de Valores</li></ul><br>Para visualizar el <b>usuario Comitente,</b><br>el menú <b>Fondos</b> el parámetro<br>general en el BO: <b>P_ComitenteFondos</b><i class="caret"></i>debe estar en <b>TRUE.</b></td></tr></table>
        <table class="t2"><tr><th>Paso</th><th class="ac">Acción</th></tr>
          <tr class="h50"><th class="n">2.</th><td><b>Usuario Comitente :</b><br>&nbsp; El sistema muestra una lista detallando los comitentes activos y <mark class="g">no bloqueados</mark> en los cuales la<br>persona es condómino y posee cuenta para el mercado fondos<br>El usuario selecciona un comitente.</td></tr>
          <tr class="h107"><th class="n"></th><td><b>Usuario de backoffice</b><br>Si el tipo de usuario es usuario del BackOffice:<ol><li>El usuario ingresa la descripción o el número del comitente.</li><li>El sistema muestra una lista predictiva con el resultado obtenido.</li><li>El usuario debe tener permiso de acceso al comitente. El sistema llama al CU PEC03. Acceso<br>de un usuario a un comitente.</li><li>El comitente debe poseer una cuenta para el mercado Fondo.</li><li class="g">El comitente no debe estar bloqueado.</li></ol></td></tr>
          <tr><th class="n">3.</th><td>El usuario selecciona un comitente.</td></tr>
          <tr><th class="n">4.</th><td>El sistema lista los fondos activos en los que posee saldos el comitente.<br>Son los instrumentos en custodia que cumplan las siguientes condiciones:<br><br><ul><li>Los instrumentos pertenecientes al modelo fondo.</li><li>La &nbsp; custodia corresponde a la custodia relacionada al instrumento.</li></ul>Si el tipo de instrumento no está relacionado con un comprobante de <mark>suscri</mark>pción no se debe<br><span class="ind">visualizar.</span></td></tr>
        </table>
      </article>
    </div>
  </div>
  <div class="w-stat"><span>Page 54 of 129</span><span>4 of 28187 words</span><svg class="i s10"><use href="#book"/></svg><span>Spanish (Argentina)</span><span>Text Predictions: On</span><span class="acc strong"><svg class="i s11"><use href="#access"/></svg>Accessibility: Investigate</span><div><span class="acc"><svg class="i s10"><use href="#fit"/></svg>Focus</span><svg class="i s11"><use href="#read"/></svg><span class="vw"><svg class="i s11"><use href="#doc"/></svg></span><svg class="i s11"><use href="#doc"/></svg><span class="zm">−<input type="range" aria-label="Zoom" value="50">+</span><span>100%</span></div></div>
</div>
<footer class="task">
  <div class="t-wx"><span class="wx"><svg viewBox="0 0 24 18"><use href="#cloud"/></svg><i class="bdg r">4</i></span><span class="two"><b>13°C</b><span>Mayorm. nublado</span></span></div>
  <div class="t-mid">
    <button class="t-start" aria-label="Inicio"><svg class="s16"><use href="#win"/></svg></button>
    <label class="t-search"><svg class="i s12"><use href="#search"/></svg><input placeholder="Search"><svg class="tiger"><use href="#tiger"/></svg></label>
    <div class="t-apps"><button aria-label="Vista de tareas"><svg><use href="#tview"/></svg></button><button class="cur" aria-label="Edge"><svg><use href="#edge"/></svg></button><button class="run" aria-label="Outlook"><svg><use href="#outlook"/></svg></button><button class="run" aria-label="Excel"><svg><use href="#excel"/></svg></button><button class="run" aria-label="Explorador"><svg><use href="#explorer"/></svg></button><button class="run pink" aria-label="Power Automate"><svg><use href="#pa"/></svg></button><button class="run" aria-label="WhatsApp"><svg><use href="#wa"/></svg><i class="bdg bl">5</i></button><button aria-label="Teléfono"><svg><use href="#phone"/></svg></button><button class="run" aria-label="Teams"><svg><use href="#teams"/></svg><i class="bdg r">2</i></button><button class="run" aria-label="Word"><svg><use href="#word"/></svg></button><button class="run" aria-label="Chrome"><svg><use href="#chrome"/></svg></button></div>
  </div>
  <div class="t-tray"><span class="two end"><span>16:18</span><span>29/7/2025</span></span></div>
</footer>
</section>
</main>
</body>
</html>
```

FILE: styles.css
```css
*{box-sizing:border-box}
body{margin:0;font:8px/12px "Open Sans","Noto Sans",sans-serif;overflow:hidden}
h1,h2,h3,h4,h5,h6,p,ul,ol,figure{margin:0;padding:0;font-size:inherit;font-weight:inherit}
button,input,select,textarea{font:inherit;color:inherit;background:none;border:0;padding:0;margin:0;min-width:0}
a{color:inherit;text-decoration:none}
table{border-collapse:collapse}
i,em{font-style:normal}
.defs{position:absolute;width:0;height:0}
svg{flex:none;display:block}
.i{fill:none;stroke:currentColor;stroke-width:2}
.b3{stroke-width:3}
.s6{width:6px;height:6px}.s8{width:8px;height:8px}.s9{width:9px;height:9px}.s10{width:10px;height:10px}.s11{width:11px;height:11px}.s12{width:12px;height:12px}.s14{width:14px;height:14px}.s16{width:16px;height:16px}.s24{width:24px;height:24px}
.far{margin-left:auto}
.desk{display:grid;grid-template-columns:repeat(3,1fr);height:100vh}
.screen{display:flex;flex-direction:column;min-width:0;min-height:0;overflow:hidden}
.app{flex:1;display:flex;flex-direction:column;min-height:0}

/* shared scrollbars */
.sbar{width:11px;flex:none;background:#fcfcfc;display:flex;flex-direction:column;align-items:center;padding:4px 0}
.tri-u{border:3px solid transparent;border-top:0;border-bottom:5px solid #888}
.tri-d{border:3px solid transparent;border-bottom:0;border-top:5px solid #888;margin-top:auto}
.sb-th{width:6px;border-radius:3px;background:#8b8b8b;margin-top:4px}
.th1{height:31%}.th2{height:33px}.th3{height:75%;margin-top:auto}

/* taskbar */
.task{height:34px;flex:none;display:grid;grid-template-columns:1fr auto 1fr;align-items:center;background:#dadada;border-top:1px solid #b4b4b4;color:#555}
.t-wx{display:flex;align-items:center;gap:5px;padding-left:13px}
.wx{position:relative;width:18px;height:24px;padding-top:10px}
.wx svg{width:18px;height:13px}
.bdg{position:absolute;min-width:11px;height:11px;border-radius:6px;color:#fff;font-size:8px;line-height:11px;text-align:center}
.bdg.r{background:#c42b1c}.bdg.bl{background:#0f7ad8}
.wx .bdg{left:8px;top:0}
.two{display:flex;flex-direction:column}
.two b{font-weight:400;color:#222}
.two.end{text-align:right}.two.mid{text-align:center;color:#222}
.t-mid{display:flex;align-items:center}
.t-start{width:33px;display:flex;justify-content:center}
.t-search{width:155px;height:22px;border-radius:11px;background:#f3f3f3;border-bottom:1px solid #c4c4c4;display:flex;align-items:center;gap:7px;padding:0 3px 0 7px;color:#222}
.t-search input{flex:1}
.t-search input::placeholder{color:#5c5c5c;opacity:1}
.tiger{width:31px;height:18px;fill:none}
.t-apps{display:grid;grid-template-columns:repeat(11,1fr);width:346px;margin-left:2px}
.t-apps button{position:relative;height:30px;display:flex;align-items:center;justify-content:center}
.t-apps svg{width:17px;height:17px;fill:none}
.t-apps .cur,.t-apps .pink{margin:0 2px;border-radius:3px;background:#eee}
.t-apps .pink{background:#ecb0ab}
.t-apps .run::after,.t-apps .cur::after{content:"";position:absolute;bottom:0;width:4px;height:2px;border-radius:1px;background:#777}
.t-apps .cur::after{width:11px;background:#0f7ad8}
.t-apps .pink::after{background:#c42b1c}
.t-apps .bdg{right:3px;top:2px}
.t-tray{display:flex;justify-content:flex-end;align-items:center;padding-right:16px}
.t-tray.main{padding-right:13px;gap:13px;color:#222}
.upd{position:relative}
.upd i{position:absolute;right:0;bottom:0;width:6px;height:6px;border-radius:3px;background:#f11}
.net{display:flex;gap:5px}

/* Chrome */
.chrome{background:#282828;color:#e3e3e3}
.c-tabs{height:28px;flex:none;background:#000;display:flex;align-items:flex-end;padding:0 12px 0 4px}
.c-drop{width:20px;height:20px;border-radius:6px;background:#333;display:flex;align-items:center;justify-content:center;margin:0 4px 4px 0}
.c-tab{width:169px;height:24px;display:flex;align-items:center;gap:6px;padding:0 12px 4px 7px;color:#c7c7c7}
.c-tab span{flex:1;white-space:nowrap;-webkit-mask-image:linear-gradient(90deg,#000 80%,#0004 92%)}
.c-sep{background:linear-gradient(#444,#444) 0 4px/1px 12px no-repeat}
.c-on{background:#353535;border-radius:7px 7px 0 0;color:#fff}
.c-new{width:30px;height:20px;margin-bottom:4px;display:flex;align-items:center;justify-content:center;color:#999}
.c-win{margin-left:auto;display:flex;gap:24px;align-items:center;height:20px;margin-bottom:4px;color:#888;padding-right:6px}
.c-bar{height:33px;flex:none;background:#353535;display:flex;align-items:center;padding:0 4px;border-radius:5px 5px 0 0}
.cell{width:25px;height:24px;display:flex;align-items:center;justify-content:center;flex:none}
.cell.dim,.dim{color:#7c7c7c}
.c-omni{flex:1;height:24px;margin:0 6px 0 7px;border-radius:12px;background:#202124;display:flex;align-items:center;padding:0 11px 0 4px;min-width:0}
.c-chip{display:flex;align-items:center;gap:4px;height:18px;width:36px;padding-left:3px;border-radius:9px;background:#333437;color:#fff;margin-right:6px;font-weight:600}
.c-url{flex:1;font:10px/14px Roboto,sans-serif;color:#8d9095;white-space:nowrap}
.c-url b{font-weight:400;color:#fff}
.trans{width:11px;height:11px;background:#4285f4;color:#fff;font-size:7px;line-height:10px;padding-left:1px;border-right:3px solid #ddd;border-bottom:2px solid #ccc}
.c-vsep{width:1px;height:11px;background:#000;margin:0 5px 0 8px}
.face{width:14px;height:14px;border-radius:7px;background:radial-gradient(circle at 50% 40%,#3b5b8c 0 25%,#7fb0dc 40%,#3f7bb4)}
.c-marks{height:25px;flex:none;background:#353535;border-bottom:1px solid #5c5c5c;display:flex;align-items:center;padding:0 10px 3px 13px;gap:11px;white-space:nowrap}
.c-marks a{display:flex;align-items:center;gap:4px}
.c-msep{width:1px;height:11px;background:#000}
.yt{width:11px;height:8px;border-radius:2px;background:#f00}
.yt::after{content:"";display:block;width:0;margin:2px 0 0 4px;border:2px solid transparent;border-left:4px solid #fff;border-right:0}
.sq{width:11px;height:11px;border-radius:2px;background:#fff;color:#111;font-size:9px;font-weight:700;line-height:10px;text-align:center}
.nac{background:linear-gradient(45deg,#fff 45%,#333 46% 54%,#fff 55%)}
.coin{border-radius:6px;font-size:8px}
.lib{border-radius:6px;background:#2aa3d8;color:#fff;font-size:8px}
.cnv{border-radius:6px;background:linear-gradient(90deg,#8b1a1a 50%,#bbb 50%)}
.day{background:#f60}
.es{width:11px;font-size:9px;color:#2a9d4a}.es b{color:#d33}
.c-more{margin-left:auto;font-size:12px}
.p-bar{height:40px;flex:none;background:#3c3c3c;display:grid;grid-template-columns:1fr auto 1fr;align-items:center;padding:0 17px}
.p-left{display:flex;align-items:center;gap:18px}
.p-left h1{font:600 10px/14px Roboto,sans-serif;color:#fff;white-space:nowrap}
.p-mid{display:flex;align-items:center;gap:11px}
.p-mid input{background:#191b1c;height:14px;text-align:center;color:#fff}
.p-num{width:17px}.p-num+span{margin-left:-8px}
.p-zoom{width:31px}
.p-sep{width:1px;height:14px;background:#5f5f5f}
.p-right{display:flex;justify-content:flex-end;gap:14px}
.p-body{flex:1;display:flex;min-height:0}
.p-thumbs{width:202px;flex:none;background:#28292b;padding-top:17px;overflow:hidden;display:flex;flex-direction:column;align-items:center}
.p-thumbs figure{width:77px;flex:none;text-align:center;font-size:9px}
.p-thumbs svg{width:77px;height:100px;fill:none}
.p-thumbs .on svg{outline:4px solid #8ab4f8}
.p-thumbs figcaption{height:34px;line-height:28px}
.p-view{flex:1;overflow:hidden;padding-top:2px;border-left:1px solid #555}
.sheet{width:51%;min-height:640px;margin:0 auto;background:#fff;color:#30323a;padding:28px 34px 0;font:8px/13px Inter,Roboto,sans-serif;box-shadow:0 0 3px #000}
.sh-head{height:44px;display:flex;justify-content:space-between;padding:0 2px 0 4px}
.experts{display:flex;flex-direction:column;font:10px/13px "Open Sans",sans-serif;color:#3c3a5c}
.experts b{font-weight:700;color:#25234b}
.experts em{font:700 5px/6px Inter,sans-serif}
.furlong{display:flex;gap:11px}
.f-mark{position:relative;width:40px;height:41px}
.f-mark svg{width:40px;height:41px}
.f-mark b{position:absolute;inset:0;text-align:center;font:700 31px/40px "Liberation Serif",serif;color:#10284a}
.f-name{font:24px/24px "Liberation Serif",serif;color:#28264d;padding-top:9px;display:flex;flex-direction:column}
.f-name em{font:14px/10px "Open Sans",sans-serif;color:#a31c30;text-align:right;padding-right:3px}
.sheet h2{margin-top:58px;text-align:center;font:600 11px/16px Roboto,sans-serif;color:#1d1f24}
.sheet .day{border-left:1px dashed #c4c4c4;padding:7px 0 0 25px;margin-top:5px;background:none}
.sheet h2+.day{margin-top:32px}
.day h3{font:600 10px/16px Roboto,sans-serif;color:#1296d3;margin:0 0 11px -11px;display:flex;align-items:center}
.day h3 i{width:14px;height:14px;border:2px solid #c9c9c9;border-radius:7px;background:#fff;margin:4px 7px 0 -22px}
.day h4{font-weight:600;height:20px;display:flex;align-items:center;gap:6px;color:#1d1f24;white-space:nowrap}
.day h4 .s14{margin-left:2px}
.day p{margin-top:5px;white-space:nowrap}
.day h4+p{margin-top:4px}
.day h5{font:600 9px/16px Roboto,sans-serif;margin-top:9px;color:#1d1f24}
.day .tight{margin-top:3px}
.day .hotel{height:12px}
.dash{display:grid;grid-template-columns:4px 4px;gap:5px;padding:14px 0 9px;height:31px;align-content:start}
.dash i{height:1px;background:#bbb}
.red{color:#b8402c}.yel{color:#e6c12f}.ora{color:#d78d3a}

/* Edge */
.edge{background:#0d4c7c;color:#fff}
.e-tabs{height:24px;flex:none;background:#072b45;display:flex;padding-right:11px}
.e-ws{width:36px;display:flex;align-items:center;justify-content:center}
.e-ws i{width:10px;height:10px;border:1px solid #fff;border-top-width:3px;border-left-width:2px;border-radius:2px;margin-right:4px}
.e-tab{width:170px;display:flex;align-items:center;gap:7px;padding:0 7px 0 5px}
.e-tab span{flex:1;white-space:nowrap}
.e-tab .i:first-child{opacity:.8}
.e-tab.on{background:#0d4c7c;border-radius:6px 6px 0 0}
.e-tab.line{background:linear-gradient(#4d6679,#4d6679) 100% 5px/1px 14px no-repeat}
.fade{-webkit-mask-image:linear-gradient(90deg,#000 85%,#0006)}
.replit{width:10px;height:10px;margin-left:1px;background:linear-gradient(#f26207,#f26207) 0 0/5px 4px no-repeat,linear-gradient(#f26207,#f26207) 5px 3px/5px 4px no-repeat,linear-gradient(#f26207,#f26207) 0 6px/5px 4px no-repeat,radial-gradient(#5bd86f 60%,transparent 65%) 5px 6px/5px 5px no-repeat}
.mis{width:12px;height:12px;background:linear-gradient(90deg,#6fa8cc 20%,#f4f7f9 20% 60%,#cfdbe3 60%)}
.e-new{width:30px;display:flex;align-items:center;justify-content:center}
.e-win{margin-left:auto;display:flex;align-items:center;gap:23px}
.e-bar{height:29px;flex:none;display:flex;align-items:center;gap:17px;padding:0 7px 0 4px}
.e-ic{width:31px;height:22px;display:flex;align-items:center;justify-content:center;margin-right:-17px}
.e-omni{flex:1;height:23px;margin-left:22px;border:1px solid #47759a;border-radius:12px;background:#0a3a60;display:flex;align-items:center;gap:11px;padding:0 10px 0 12px;font:10px/14px Roboto,sans-serif;color:#92a3b1}
.e-omni>.i{color:#fff}
.e-omni b{font-weight:400;color:#fff}
.e-oi{margin-left:auto;display:flex;gap:17px;color:#90a0ac}
.e-sep{width:1px;height:11px;background:#3f6f93;margin:0 -6px}
.e-av{width:16px;height:16px;border-radius:8px;background:#d2d0ce;overflow:hidden}
.rep{flex:1;min-height:0;margin:0 4px 3px 3px;background:#0e0f16;border-radius:5px;display:flex;flex-direction:column;font-family:Roboto,sans-serif}
.r-head{height:34px;flex:none;display:grid;grid-template-columns:36px 14px 1fr auto 1fr;align-items:center;font-size:10px;color:#e6e8ec}
.rh{margin-left:11px}
.r-logo{width:13px;height:14px;background:#000;border:1px solid #222;border-radius:2px;display:flex;align-items:center;justify-content:center}
.r-head h1{padding-left:5px;font-size:10px}
.r-run{height:23px;display:flex;align-items:center;border-radius:3px;background:#5338ce;color:#dcd6ff;padding-right:6px;gap:6px;font-weight:500;margin-right:48px}
.r-run span{width:19px;height:23px;background:#2c1f5c;border-radius:3px 0 0 3px;display:flex;align-items:center;justify-content:center;color:#8f7cf5}
.s12,.s11{fill:currentColor}
.i.s12,.i.s11{fill:none}
.r-acts{display:flex;justify-content:flex-end;align-items:center;gap:10px;padding-right:12px}
.r-btn{height:23px;padding:0 6px;border-radius:3px;background:#1a1c25;display:flex;align-items:center;gap:6px}
.r-pair{display:flex;gap:1px;margin-left:-4px}
.r-sm{padding:0 4px}
.r-dep{position:relative}
.r-dep i{position:absolute;right:-3px;top:0;width:4px;height:4px;border-radius:2px;background:#0a9a1c}
.r-user{display:flex;align-items:center;gap:3px;margin-left:8px}
.r-user span{position:relative;width:17px;height:17px;border-radius:9px;background:#262935;font-size:7px;line-height:17px;text-align:center;color:#aab}
.r-user i{position:absolute;left:-2px;bottom:-2px;width:8px;height:8px;border-radius:4px;background:#5b2a05;color:#ff8a2a;line-height:8px}
.r-body{flex:1;min-height:0;display:grid;grid-template-columns:34px 30% 1fr;padding-right:4px}
.r-rail{display:flex;flex-direction:column;justify-content:space-between;align-items:center;color:#bfc3cb;padding-bottom:4px}
.r-rail div{display:flex;flex-direction:column;align-items:center}
.r-rail div>span{width:25px;height:25px;display:flex;align-items:center;justify-content:center;position:relative}
.r-rail hr{width:25px;margin:4px 0;border:0;border-top:1px solid #2b2e3a}
.dot::before{content:"";position:absolute;left:-2px;width:3px;height:3px;border-radius:2px;background:#9a9ea8}
.r-fold{width:22px;height:23px;border:1px solid #262935;border-radius:3px;display:flex;align-items:center;justify-content:center}
.vio{color:#9174f6}.gold{color:#8f7a3a}.sky{color:#7fb8e6}.grn{color:#3fa55c}.teal{color:#1c7f8f}.grn2{color:#55c86a}
.agent{background:#1a1c23;margin-right:0;margin-bottom:6px;border-radius:3px;display:flex;flex-direction:column;min-height:0;color:#d8dbe2;font-size:10px;line-height:16px}
.a-tabs{height:23px;flex:none;background:#15161d;border-bottom:1px solid #262935}
.a-tabs button{width:65px;height:23px;border-top:1px solid #0079f2;border-right:1px solid #262935;background:#1a1c23;display:flex;align-items:center;gap:5px;padding-left:4px}
.a-flow{flex:1;display:flex;flex-direction:column;padding:5px 6px}
.a-top{height:23px;flex:none;border-radius:3px;background:#23252d;display:flex;align-items:center;justify-content:space-between;padding:0 7px 0 5px;font:8px/12px Inter,sans-serif;color:#aeb2bb}
.a-top b{font-weight:500;display:flex;align-items:center;gap:5px;color:#e2e4e9}
.a-txt{padding:1px 8px 3px;white-space:nowrap}
.a-txt span{color:#9ca0aa}
.a-step{height:20px;display:flex;align-items:center;gap:4px;padding:0 11px 0 9px;color:#b4b8c1}
.a-step span{flex:1}
code{font:9px/12px "Liberation Mono",monospace}
.a-check{margin-top:6px;border:1px solid #25403a;border-radius:5px;padding:7px 8px 8px;display:flex;gap:6px;align-items:flex-start}
.a-check>div{flex:1}
.a-check .ok{color:#4ccb6a;margin-top:2px}
.a-check small,.a-work,.a-in small{font:8px/16px Inter,sans-serif;color:#b4b8c1;display:block}
.a-check p{margin-top:2px;color:#e8eaee}
.pen{display:inline-block;vertical-align:-2px;margin-left:2px;color:#777b86}
.a-btns{display:flex;gap:7px;margin-top:6px}
.a-btns button{height:19px;border:1px solid #25403a;border-radius:2px;display:flex;align-items:center;gap:3px;padding:0 6px;font:500 8px/12px Inter,sans-serif}
.shot{width:70px;height:50px;border-radius:3px;align-self:center;margin-bottom:2px}
.a-check+.a-work{height:26px;margin-top:6px;border:1px solid #23252f;border-radius:5px;display:flex;align-items:center;gap:6px;padding:0 8px}
.a-work span{flex:1}
.a-msg{margin:14px -1px 0;padding:6px 9px;border-radius:6px;background:#2b2645;color:#dddbe8;white-space:nowrap}
.a-msg p+p,.a-msg ul,.a-msg ul+p{margin-top:11px}
.a-msg ul{padding-left:16px}
.a-msg li+li{margin-top:4px}
.a-in{margin-top:17px;height:73px;border:1px solid #333642;border-radius:4px;background:#23252d;display:flex;flex-direction:column;justify-content:space-between}
.a-in small{line-height:19px;padding-left:9px;border-bottom:1px solid #333642}
.a-in textarea{padding:0 8px;height:16px;resize:none;overflow:hidden}
.a-in textarea::placeholder{color:#8d919b;opacity:1}
.a-in div{display:flex;align-items:center;gap:9px;padding:0 4px 4px 5px;color:#b4b8c1}
.a-in div span{display:flex;align-items:center;gap:4px;font-size:9px}
.a-in div button{width:17px;height:17px;border-radius:3px;background:#2b2e38;margin-left:auto;display:flex;align-items:center;justify-content:center}
.prev{margin:0 0 6px 4px;background:#1a1c23;border-radius:3px;display:flex;flex-direction:column;min-height:0;min-width:0;color:#aeb2bb;font-size:10px}
.v-tabs{height:23px;flex:none;display:flex;background:#15161d;align-items:center;padding-right:7px;border-bottom:1px solid #262935}
.v-tabs button{height:23px;display:flex;align-items:center;gap:5px;padding:0 18px 0 5px;border-right:1px solid #262935;color:#9599a3}
.v-tabs button.on{background:#1a1c23;color:#e6e8ec;padding-right:17px;padding-left:6px}
.v-tabs .it{font-style:italic;padding-right:18px}
.v-tabs>.i{margin-left:8px}.v-tabs>.far{margin-left:auto}
.v-url{height:25px;flex:none;display:flex;align-items:center;gap:8px;padding:0 6px;border-bottom:1px solid #23252f}
.v-url>.i:nth-child(2){margin-left:3px}
.lit{color:#e6e8ec}
.v-url div{flex:1;height:17px;border-radius:3px;background:#23252d;display:flex;align-items:center;gap:3px;padding:0 5px 0 4px;color:#dde}
.v-url div span{flex:1}
.v-url b{font-weight:400;color:#55c86a}
.v-page{flex:1;min-height:0;position:relative;background:#f7f7f7;display:grid;grid-template-columns:21fr 10fr 10px;padding-left:24px;column-gap:24px;font:9px/14px "Open Sans",sans-serif;color:#1a2030;overflow:hidden;border-radius:0 0 3px 3px}
.card{background:#fff;border:1px solid #e6e7ea;border-radius:5px;box-shadow:0 2px 5px #0001}
.step{height:63px;border-top:0;border-radius:0 0 5px 5px;text-align:center;padding-top:14px}
.step h2{font:600 12px/18px "Open Sans",sans-serif}
.step p{color:#5b6270}
.v-nav{margin-top:24px;border-top:1px solid #e2e3e6;padding-top:11px;display:flex;justify-content:space-between}
.v-nav.low{padding-top:17px}
.v-nav button{height:28px;border-radius:4px;display:flex;align-items:center;font-weight:600}
.ant{width:84px;border:1px solid #e2e3e6;background:#fff;padding-left:12px;gap:13px;color:#111}
.gen{background:#0468c4;color:#fff;padding:0 11px 0 12px;gap:11px}
.v-nav .ant{border:1px solid #e2e3e6}
.rev{margin-top:18px;padding:17px 17px 16px}
.rev-h{display:flex;align-items:center;gap:6px;height:24px}
.rev-h .s14{color:#0468c4}
.rev-h h2{font:600 12px/18px "Open Sans",sans-serif;color:#111827}
.rev-h button{margin-left:auto;width:24px;height:24px;border:1px solid #bfdbfe;border-radius:4px;color:#2563eb;display:flex;align-items:center;justify-content:center}
.sum{margin-top:12px;background:#f9fafb;border-radius:5px;padding:11px 11px 7px;line-height:20px;color:#454c59}
.sum h3{font:600 10px/20px "Open Sans",sans-serif;color:#111827;margin-bottom:4px}
.rev-b{display:flex;gap:11px;margin-top:11px}
.rev-b button{height:29px;border-radius:4px;color:#fff;font-weight:600;padding:0 11px;display:flex;align-items:center;gap:11px}
.blue{background:#3b82f6}.green{background:#16a34a}
.docv{position:relative;margin-top:1px;height:566px;padding:17px 20px 0 16px;overflow:hidden}
.dv-h{display:flex;align-items:center;height:40px}
.dv-h h2{flex:1;font:500 12px/20px "Open Sans",sans-serif;padding-left:6px;width:90px;color:#111}
.dv-h h2+.pill{flex:none}
.pill{border:1px solid #e2e3e6;border-radius:14px;padding:0 7px;font:500 8px/13px "Open Sans",sans-serif;height:28px;margin-right:15px}
.dv-h>.s12:last-child{margin-right:8px}
.prog{height:7px;margin-top:3px;border-radius:3px;background:#e5e7eb}
.prog i{display:block;width:89%;height:7px;border-radius:3px;background:#2563eb}
.dv-s{margin-top:7px;height:16px;display:flex;align-items:center;justify-content:space-between;font-size:8px}
.dv-s span{background:#f4f4f3;border-radius:8px;padding:0 8px;line-height:16px;font-weight:600}
.dv-s em{color:#6b7280}
.docv h1{font:800 22px/25px "Open Sans",sans-serif;color:#111827;margin:12px 0 19px}
.docv p{margin-bottom:13px;color:#454c59;white-space:nowrap}
.docv p b{font-weight:600;color:#111827}
.dv-sb{position:absolute;right:0;top:0;width:4px;height:437px;border-radius:2px;background:#aab4bc}
.v-sb{width:10px}
.toast{position:absolute;right:23px;bottom:11px;width:275px;padding:18px 17px 18px;background:#ef4444;border-radius:4px;color:#fff;box-shadow:0 4px 8px #0003}
.toast b{font-weight:600}
.toast p{margin-top:4px;color:#fde4e4;white-space:nowrap}

/* Word */
.word{background:#f0f0f0;color:#2b2b2b}
.w-title{height:35px;flex:none;display:flex;align-items:center;color:#b4b4b4;padding-right:13px}
.w-quick{width:558px;display:flex;align-items:center;padding-left:11px;gap:11px}
.w-quick .s6{margin-left:-6px}
.w-tog{width:32px;height:14px;border:1px solid #b4b4b4;border-radius:7px;background:#fff;display:flex;align-items:center;gap:4px;margin-left:-6px}
.w-tog i{width:10px;height:10px;border-radius:5px;background:#b4b4b4;margin-left:1px}
.w-name{margin-left:4px;margin-right:-7px;font-size:8px;white-space:nowrap}
.w-search{width:261px;height:22px;border:1px solid #dcdcdc;border-bottom-color:#c6c6c6;border-radius:3px;display:flex;align-items:center;gap:9px;padding-left:8px;font-size:9px}
.w-search input::placeholder{color:#b4b4b4;opacity:1}
.w-win{margin-left:auto;display:flex;align-items:center;gap:25px}
.w-av{width:17px;height:17px;border-radius:9px;background:#d0d0d0;color:#555;display:flex;align-items:center;justify-content:center}
.w-menu{height:20px;flex:none;display:flex;align-items:center;gap:15px;padding:0 9px 0 16px;font-size:9px}
.w-menu a{line-height:18px;border-bottom:2px solid transparent}
.w-menu .on{font-weight:600;border-color:#1a4fa8}
.w-menu div{margin-left:auto;display:flex;gap:6px}
.w-menu button{height:17px;border:1px solid #8f8f8f;border-radius:3px;background:#fff;display:flex;align-items:center;gap:3px;padding:0 3px}
.w-menu .sh{background:#185abd;border-color:#185abd;color:#fff}
.ribbon{height:72px;flex:none;margin:0 6px;background:#fff;border-radius:6px;box-shadow:0 1px 3px #0003;display:flex;position:relative;z-index:1;padding:4px 0}
.rg{border-right:1px solid #d6d6d6;display:flex;flex-direction:column;justify-content:space-between;padding:0 5px;flex:none}
.rg h6{text-align:center;line-height:10px;display:flex;justify-content:center;align-items:center}
.rg h6 .i{margin-left:auto}
.rg h6:has(.i)::before{content:"";width:6px;margin-right:auto}
.g-clip{width:124px}.g-font{width:221px}.g-par{width:179px}.rg.g-sty{flex:1}.g-ed{width:69px}.g1{width:41px}.g2{width:53px}.g3{width:44px}.g4{border:0;width:36px;align-items:center;justify-content:flex-end}
.g1,.g2,.g3{padding:0}
.g4 .i{margin-left:8px}
.rg .tools{display:flex;justify-content:center}
.g-clip .tools{justify-content:flex-start;gap:8px;padding-left:5px}
.g-ed .tools{justify-content:flex-start}
.big{display:flex;flex-direction:column;align-items:center;padding-top:2px;gap:2px}
.bi{width:20px;height:22px;fill:none}
.bi.i{stroke-width:1}
.big.off{color:#b4b4b4}
.lst{display:flex;flex-direction:column;flex:1;white-space:nowrap}
.lst button{height:19px;display:flex;align-items:center;gap:4px}
.lst .far{margin-right:6px}
.tools.rows{flex-direction:column;gap:6px;padding-top:5px}
.rows>div{display:flex;align-items:center;justify-content:space-between;height:17px;color:#444}
.rows .b3{stroke:#333}
.rows select{height:17px;border:1px solid #8a8a8a;border-radius:3px;background:#fff;font-size:9px;padding:0;color:#222}
.fam{width:88px}.siz{width:32px}
.vs{width:1px;height:17px;background:#d6d6d6}
.gl{font-size:12px}
.gl sup,.gl sub{font-size:6px;line-height:0;color:#1e7fc2}
.era{border-bottom:2px solid #a33fb0;line-height:11px}
.ital{font:italic 12px/14px "Liberation Serif",serif}
.und{text-decoration:underline;font-size:11px}
.str{text-decoration:line-through;font-size:9px}
.sx{font-size:10px;font-weight:600}
.glow{font-weight:700;color:#1e7fc2;font-size:13px}
.rows .on{width:17px;height:17px;border:1px solid #555;border-radius:3px;background:#e8e8e8;display:flex;align-items:center;justify-content:center;font-size:10px}
.ul{border-bottom:3px solid;height:14px;font-size:11px;line-height:10px;width:11px;text-align:center}
.yel2{border-color:#fff200}.red2{border-color:#e00000}
.az{display:flex;flex-direction:column;font-size:8px;line-height:8px}.az b{color:#1e7fc2}
.gal{display:grid;grid-template-columns:repeat(10,1fr) 17px;height:43px;margin:5px 2px 0;border:1px solid #c9c9c9;border-radius:3px}
.gal button{display:flex;flex-direction:column;align-items:center;justify-content:flex-end;color:#5f5f5f;padding:0 0 3px;white-space:nowrap}
.gal .sel{border:1px solid #555;outline:1px solid #ccc;outline-offset:-3px}
.st{height:24px;line-height:24px;color:#000;white-space:nowrap;font-size:8px}
.s-em{font:italic 10px/24px "Liberation Serif",serif}
.s-h1{font-size:10px;font-weight:600;font-variant:small-caps;color:#3e74c4;border-bottom:1px solid #3e74c4;height:18px;line-height:18px;margin-bottom:4px}
.s-h2{color:#4472c4;font-weight:600;font-size:9px}
.s-h3{font-weight:600;font-size:9px}
.s-sub{color:#777;font-size:9px}
.s-ti{font-size:18px;font-weight:300}
.s-h4{font-weight:700;font-size:10px}
.s-se{font:italic 10px/24px "Liberation Serif",serif;color:#555}
.more{border:1px solid #555;border-radius:0 3px 3px 0;display:flex;align-items:center;justify-content:center;margin:-1px}
.w-body{flex:1;min-height:0;display:flex}
.nav{width:249px;flex:none;border-right:1px solid #d0d0d0;padding:10px 13px 0 10px;overflow:hidden;color:#444}
.n-h{display:flex;align-items:center;gap:14px;height:14px;padding-right:0}
.n-h h2{flex:1;font-size:11px;color:#2b2b2b}
.n-s{display:flex;align-items:center;height:17px;margin-top:11px;border:1px solid #a6a6a6;background:#fff;padding:0 2px 0 5px;gap:5px}
.n-s input{flex:1}
.n-r{display:flex;align-items:center;margin-top:8px;height:12px;padding:0 1px 0 4px;gap:1px}
.n-r span{flex:1}
.n-r button{width:11px;height:10px;border:1px solid #999;background:#fff;display:flex;align-items:center;justify-content:center}
.n-t{display:flex;gap:18px;margin-top:7px;margin-bottom:3px}
.n-t a{line-height:20px;border-bottom:2px solid transparent}
.n-t .on{font-weight:700;color:#2a5699;border-color:#1a4fa8}
.nav ul{list-style:none;padding-right:9px}
.nav li{height:15px;margin-left:23px;padding-left:3px;line-height:14px;border-bottom:1px solid #f0f0f0;position:relative;white-space:nowrap}
.nav li::before{content:"";position:absolute;left:-8px;top:4px;border-left:4px solid transparent;border-bottom:4px solid #444}
.nav li.d{margin-left:34px;padding-left:4px}
.nav li.d::before{display:none}
.nav .y{background:#ffee80}.nav .b{background:#c2d5f2}
.w-view{flex:1;display:flex;justify-content:center;padding-right:12px;overflow:hidden}
.w-page{width:580px;background:#fff;border:solid #c8c8c8;border-width:0 1px;padding:1px 0 0 85px;font:9px/13px "Open Sans",sans-serif;color:#111;height:700px}
.t-head{width:447px;margin-left:-6px;height:58px}
.t-head td{border:1px solid #b4c0de;padding:0;text-align:center;color:#808080}
.t-head td[rowspan]{width:148px}
.t-head .dcu{height:20px;font:700 13px/18px "Liberation Serif",serif}
.inge{display:flex;align-items:center;gap:3px;padding-left:7px;color:#7fb6d6}
.inge span{font:300 21px/26px Roboto,sans-serif;border-left:1px solid #bcd8e8;padding-left:4px}
.w-page h2{font:700 9px/14px "Open Sans",sans-serif;color:#4472c4;margin-top:33px}
.w-page h3{font:700 9px/14px "Open Sans",sans-serif;color:#000;margin-top:10px}
.t1,.t2{width:449px;margin-left:3px}
.t1{margin-top:12px}.t2{margin-top:12px}
.w-page th{background:#daeef3;text-align:left;vertical-align:top;font-weight:700;padding:0}
.t1 th,.t1 td,.t2 th,.t2 td{border:1px solid #000;line-height:11px}
.t1 td,.t2 td{padding:0 0 0 4px;vertical-align:top}
.t1 th{width:77px}
.t1 .tall{height:143px}
.t1 .tall td{line-height:13px;padding-top:1px}
.w-page td ul{padding-left:35px}
.t2 th{border-left:0;width:34px}
.t2 th.ac{border-left:1px solid #000;width:auto;padding-left:4px}
.t2 .n{padding-left:6px}
.t2 td,.t2 .n{line-height:12px}
.h50{height:50px}.h107{height:107px}
.t2 td{white-space:nowrap}
.w-page ol{list-style:lower-alpha;padding-left:17px}
.w-page ol .g{width:162px;background:#d0d0d0;box-shadow:-17px 0 #d0d0d0}
mark{background:#ffee80;color:inherit}
mark.g{background:#d0d0d0}
.ind{padding-left:34px}
.caret{display:inline-block;width:1px;height:12px;background:#888;vertical-align:-3px;margin:0 1px}
.w-stat{height:16px;flex:none;background:#f5f5f5;border-top:1px solid #fff;display:flex;align-items:center;gap:14px;padding:0 5px 0 8px;color:#333;position:relative}
.w-stat div{margin-left:auto;display:flex;align-items:center;gap:16px;height:16px}
.acc{display:flex;align-items:center;gap:2px}
.strong{font-weight:600;margin-left:4px}
.vw{background:#dcdcdc;height:16px;width:27px;display:flex;align-items:center;justify-content:center;margin:0 -8px}
.zm{display:flex;align-items:center;gap:2px;font-size:10px;margin-right:-6px}
.zm input{-webkit-appearance:none;appearance:none;width:72px;height:1px;background:#666}
.zm input::-webkit-slider-thumb{-webkit-appearance:none;width:3px;height:10px;background:#555}
```
